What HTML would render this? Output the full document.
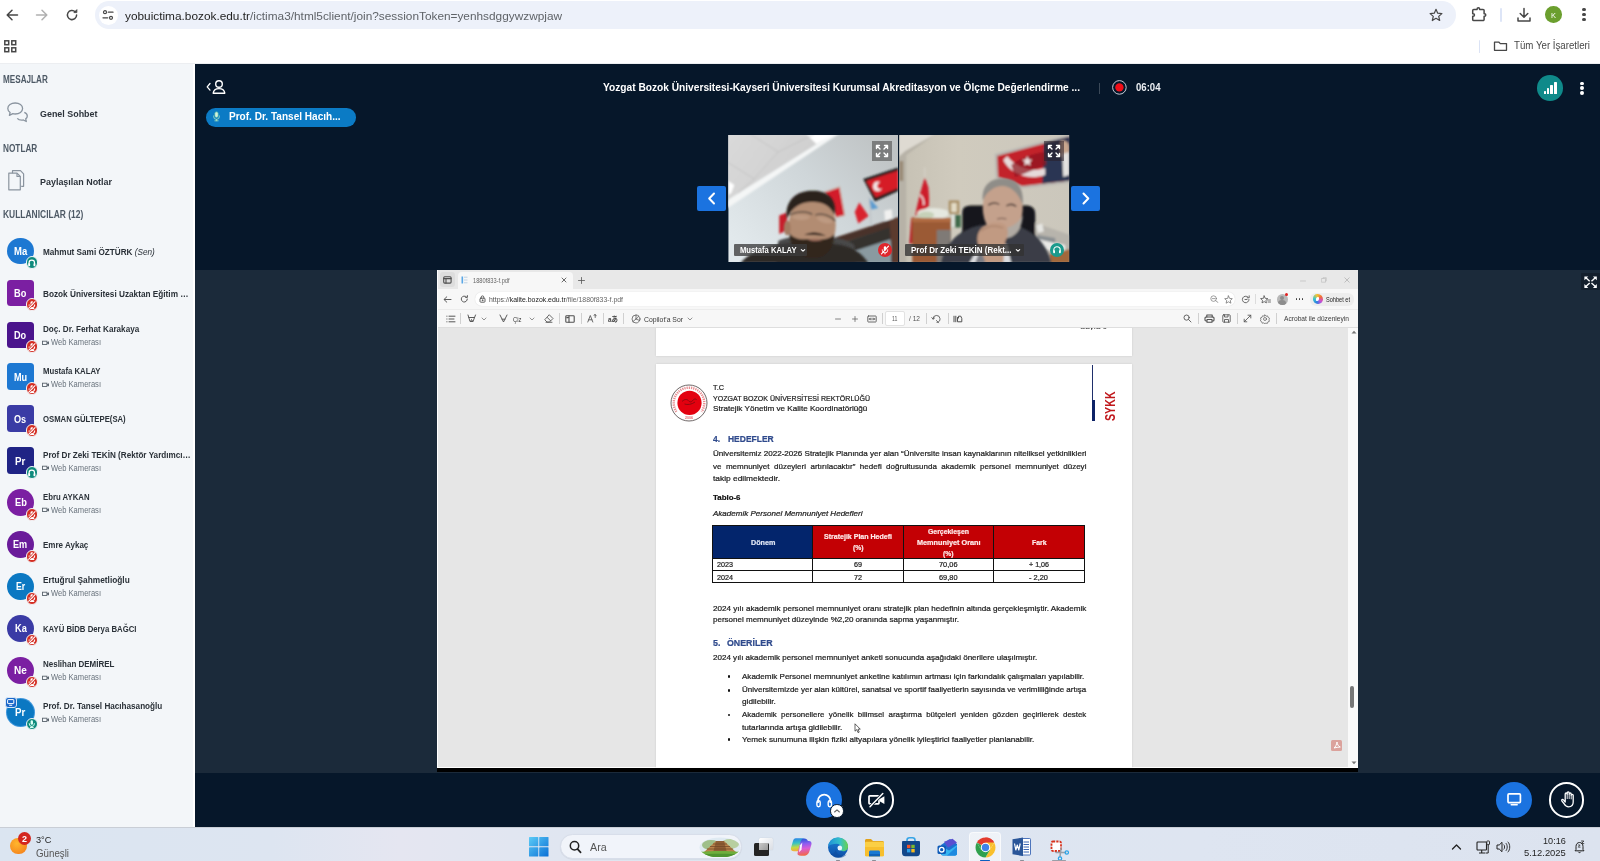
<!DOCTYPE html>
<html lang="tr"><head><meta charset="utf-8"><title>Yozgat Bozok Üniversitesi - Toplantı</title>
<style>
*{box-sizing:border-box;margin:0;padding:0}
html,body{width:1600px;height:861px;overflow:hidden;background:#fff}
body{position:relative;font-family:"Liberation Sans",sans-serif}
section,header,aside,main,footer,nav{position:absolute;left:0;top:0;width:1600px;height:861px}
.t{position:absolute;white-space:nowrap;transform-origin:0 0;line-height:normal;display:block}
footer,header,aside,main{will-change:transform}

</style></head>
<body>
<header><div style="position:absolute;left:0px;top:0px;width:1600px;height:63px;background:#fff;"></div><div style="position:absolute;left:95px;top:1px;width:1361px;height:28px;background:#edf1fa;border-radius:14px"></div><svg style="position:absolute;left:5px;top:8px;" width="14" height="14" viewBox="0 0 14 14"><path d="M12.5 7H2.5M7 2.2L2.2 7L7 11.8" fill="none" stroke="#474747" stroke-width="1.5" stroke-linecap="round" stroke-linejoin="round"/></svg><svg style="position:absolute;left:35px;top:8px;" width="14" height="14" viewBox="0 0 14 14"><path d="M1.5 7H11.5M7 2.2L11.8 7L7 11.8" fill="none" stroke="#b0b0b0" stroke-width="1.5" stroke-linecap="round" stroke-linejoin="round"/></svg><svg style="position:absolute;left:65px;top:8px;" width="14" height="14" viewBox="0 0 14 14"><path d="M11.6 7A4.6 4.6 0 1 1 10.2 3.7" fill="none" stroke="#474747" stroke-width="1.5" stroke-linecap="round"/><path d="M11.9 1.6V4.6H8.9Z" fill="#474747" stroke="#474747" stroke-width="0.8" stroke-linejoin="round"/></svg><div style="position:absolute;left:98.5px;top:5.5px;width:19px;height:19px;background:#fff;border-radius:50%"></div><svg style="position:absolute;left:102px;top:9px;" width="12" height="12" viewBox="0 0 12 12"><circle cx="3" cy="3.2" r="1.5" fill="none" stroke="#474747" stroke-width="1.2"/><path d="M6.3 3.2H11" stroke="#474747" stroke-width="1.3" stroke-linecap="round"/><circle cx="9" cy="8.8" r="1.5" fill="none" stroke="#474747" stroke-width="1.2"/><path d="M1 8.8H5.7" stroke="#474747" stroke-width="1.3" stroke-linecap="round"/></svg><span class="t" style="left:125px;top:8.5px;transform:scaleX(1.0205);font:400 11.6px 'Liberation Sans',sans-serif;color:#5f6368;"><span style="color:#1f1f1f">yobuictima.bozok.edu.tr</span>/ictima3/html5client/join?sessionToken=yenhsdggywzwpjaw</span><svg style="position:absolute;left:1429px;top:8px;" width="14" height="14" viewBox="0 0 14 14"><path d="M7 1.3L8.7 5.2L12.9 5.6L9.7 8.4L10.7 12.5L7 10.3L3.3 12.5L4.3 8.4L1.1 5.6L5.3 5.2Z" fill="none" stroke="#474747" stroke-width="1.2" stroke-linejoin="round"/></svg><svg style="position:absolute;left:1470px;top:6px;" width="18" height="16" viewBox="0 0 18 16"><path d="M2.700 4.600a1.100 1.100 0 0 1 1.100-1.100H7.100V3.100a1.250 1.250 0 0 1 2.500 0v.4h3.400a1.100 1.100 0 0 1 1.100 1.100v3.100h.4a1.250 1.250 0 0 1 0 2.500h-.4v3.300a1.100 1.100 0 0 1-1.100 1.100H3.800a1.100 1.100 0 0 1-1.100-1.100v-3.300h.5a1.250 1.250 0 0 0 0-2.500h-.5z" fill="none" stroke="#474747" stroke-width="1.500" stroke-linejoin="round"/></svg><div style="position:absolute;left:1500px;top:8px;width:2px;height:14px;background:#dde5f7;border-radius:1px"></div><svg style="position:absolute;left:1516px;top:7px;" width="16" height="16" viewBox="0 0 16 16"><path d="M8 1.5V10M4.2 6.5L8 10.2L11.8 6.5" fill="none" stroke="#474747" stroke-width="1.5" stroke-linecap="round" stroke-linejoin="round"/><path d="M2 11V14H14V11" fill="none" stroke="#474747" stroke-width="1.5" stroke-linecap="round" stroke-linejoin="round"/></svg><div style="position:absolute;left:1545.3px;top:6.4px;width:16.6px;height:16.6px;background:#6b9f2e;border-radius:50%"></div><span class="t" style="left:1551.1px;top:10.6px;transform:scaleX(0.9357);font:400 8px 'Liberation Sans',sans-serif;color:#fff;">K</span><div style="position:absolute;left:1582.4px;top:8.0px;width:3.2px;height:3.2px;background:#474747;border-radius:50%"></div><div style="position:absolute;left:1582.4px;top:13.1px;width:3.2px;height:3.2px;background:#474747;border-radius:50%"></div><div style="position:absolute;left:1582.4px;top:18.2px;width:3.2px;height:3.2px;background:#474747;border-radius:50%"></div><svg style="position:absolute;left:4px;top:40px;" width="13" height="13" viewBox="0 0 13 13"><rect x="0.8" y="0.8" width="3.9" height="3.9" fill="none" stroke="#474747" stroke-width="1.5"/><rect x="7.8" y="0.8" width="3.9" height="3.9" fill="none" stroke="#474747" stroke-width="1.5"/><rect x="0.8" y="7.8" width="3.9" height="3.9" fill="none" stroke="#474747" stroke-width="1.5"/><rect x="7.8" y="7.8" width="3.9" height="3.9" fill="none" stroke="#474747" stroke-width="1.5"/></svg><div style="position:absolute;left:1478.7px;top:39.5px;width:1.6px;height:13px;background:#dbe3f5;border-radius:1px"></div><svg style="position:absolute;left:1492.9px;top:40.4px;" width="16" height="12" viewBox="0 0 16 12"><path d="M1.5 2.2H6L7.3 3.6H13.5V10.3H1.5Z" fill="none" stroke="#474747" stroke-width="1.3" stroke-linejoin="round"/></svg><span class="t" style="left:1514px;top:39.4px;transform:scaleX(0.9153);font:400 10.6px 'Liberation Sans',sans-serif;color:#474747;">Tüm Yer İşaretleri</span><div style="position:absolute;left:0px;top:62.8px;width:1600px;height:0.8px;background:#eceef1;"></div></header><aside><div style="position:absolute;left:0px;top:63.5px;width:195px;height:763.5px;background:#fff;"></div><div style="position:absolute;left:0px;top:63.5px;width:192.8px;height:763.5px;background:#f3f6f9;"></div><span class="t" style="left:2.8px;top:72.7px;transform:scaleX(0.7687);font:700 10.6px 'Liberation Sans',sans-serif;color:#4e5a66;">MESAJLAR</span><svg style="position:absolute;left:6.3px;top:101px;" width="24" height="24" viewBox="0 0 24 24"><path d="M9.200 2C5 2 1.800 4.400 1.800 7.500c0 1.600.9 3 2.300 4L3.400 14.400l3.400-1.700c.8.2 1.600.3 2.400.3 4.200 0 7.400-2.400 7.400-5.500S13.400 2 9.200 2z" fill="none" stroke="#8a949f" stroke-width="1.300" stroke-linejoin="round"/><path d="M18.300 11.300c1.800.8 3 2.100 3 3.700 0 1.200-.6 2.200-1.600 2.900l.6 2.600-2.900-1.500c-.5.1-1.100.2-1.700.2-1.900 0-3.500-.7-4.400-1.900" fill="none" stroke="#8a949f" stroke-width="1.300" stroke-linejoin="round"/></svg><span class="t" style="left:40.3px;top:107.5px;transform:scaleX(0.9104);font:700 9.8px 'Liberation Sans',sans-serif;color:#2c333b;">Genel Sohbet</span><span class="t" style="left:2.8px;top:141.8px;transform:scaleX(0.7771);font:700 10.6px 'Liberation Sans',sans-serif;color:#4e5a66;">NOTLAR</span><svg style="position:absolute;left:6px;top:168px;" width="22" height="24" viewBox="0 0 22 24"><path d="M6.500 5.200V2.700h8l3.100 3.100v12.500h-2.400" fill="none" stroke="#8a949f" stroke-width="1.200" stroke-linejoin="round"/><path d="M2.800 5.200h8.200l3.300 3.300v13.300H2.800z" fill="none" stroke="#8a949f" stroke-width="1.200" stroke-linejoin="round"/><path d="M11 5.200v3.300h3.300" fill="none" stroke="#8a949f" stroke-width="1.200" stroke-linejoin="round"/></svg><span class="t" style="left:40.3px;top:176px;transform:scaleX(0.9118);font:700 9.8px 'Liberation Sans',sans-serif;color:#2c333b;">Paylaşılan Notlar</span><span class="t" style="left:2.8px;top:208px;transform:scaleX(0.7969);font:700 10.6px 'Liberation Sans',sans-serif;color:#4e5a66;">KULLANICILAR (12)</span><div style="position:absolute;left:6.9px;top:237.7px;width:26.8px;height:26.8px;background:#1d78d2;border-radius:50%"></div><span class="t" style="left:13.799999999999999px;top:245.9px;transform:scaleX(0.9143);font:700 10.4px 'Liberation Sans',sans-serif;color:#fff;">Ma</span><div style="position:absolute;left:25.500px;top:256.400px;width:12.800px;height:12.800px;border-radius:50%;background:#0e8a7c;border:1px solid #f3f6f9"></div><svg style="position:absolute;left:27.099999999999998px;top:258.0px;" width="9.6" height="9.6" viewBox="0 0 8 8"><path d="M1.700 5.300V4.100a2.300 2.300 0 0 1 4.600 0v1.200" fill="none" stroke="#fff" stroke-width="1"/><rect x="1" y="4.300" width="1.600" height="2.500" rx=".6" fill="#fff"/><rect x="5.400" y="4.300" width="1.600" height="2.500" rx=".6" fill="#fff"/></svg><span class="t" style="left:42.6px;top:245.7px;transform:scaleX(0.8348);font:700 9.8px 'Liberation Sans',sans-serif;color:#2a3138;">Mahmut Sami ÖZTÜRK <i style="font-weight:400">(Sen)</i></span><div style="position:absolute;left:6.9px;top:279.62px;width:26.8px;height:26.8px;background:#7b1fa2;border-radius:3.500px"></div><span class="t" style="left:14.249999999999998px;top:287.82px;transform:scaleX(0.8875);font:700 10.4px 'Liberation Sans',sans-serif;color:#fff;">Bo</span><div style="position:absolute;left:25.500px;top:298.320px;width:12.800px;height:12.800px;border-radius:50%;background:#d42d22;border:1px solid #f3f6f9"></div><svg style="position:absolute;left:27.099999999999998px;top:299.91999999999996px;" width="9.6" height="9.6" viewBox="0 0 8 8"><rect x="2.900" y="1" width="2.400" height="3.900" rx="1.200" fill="#fff"/><path d="M1.800 3.900v.2a2.300 2.300 0 0 0 4.600 0v-.2" fill="none" stroke="#fff" stroke-width=".9" stroke-linecap="round"/><path d="M2.600 7h3" stroke="#fff" stroke-width="1" stroke-linecap="round"/><path d="M1.300 6.900L6.700 1.300" stroke="#d42d22" stroke-width="2"/><path d="M1.300 6.900L6.700 1.300" stroke="#fff" stroke-width=".9" stroke-linecap="round"/></svg><span class="t" style="left:42.6px;top:287.62px;transform:scaleX(0.8404);font:700 9.8px 'Liberation Sans',sans-serif;color:#2a3138;">Bozok Üniversitesi Uzaktan Eğitim …</span><div style="position:absolute;left:6.9px;top:321.54px;width:26.8px;height:26.8px;background:#4a148c;border-radius:3.500px"></div><span class="t" style="left:14.299999999999999px;top:329.74px;transform:scaleX(0.8803);font:700 10.4px 'Liberation Sans',sans-serif;color:#fff;">Do</span><div style="position:absolute;left:25.500px;top:340.240px;width:12.800px;height:12.800px;border-radius:50%;background:#d42d22;border:1px solid #f3f6f9"></div><svg style="position:absolute;left:27.099999999999998px;top:341.84px;" width="9.6" height="9.6" viewBox="0 0 8 8"><rect x="2.900" y="1" width="2.400" height="3.900" rx="1.200" fill="#fff"/><path d="M1.800 3.900v.2a2.300 2.300 0 0 0 4.600 0v-.2" fill="none" stroke="#fff" stroke-width=".9" stroke-linecap="round"/><path d="M2.600 7h3" stroke="#fff" stroke-width="1" stroke-linecap="round"/><path d="M1.300 6.900L6.700 1.300" stroke="#d42d22" stroke-width="2"/><path d="M1.300 6.900L6.700 1.300" stroke="#fff" stroke-width=".9" stroke-linecap="round"/></svg><span class="t" style="left:42.6px;top:322.94px;transform:scaleX(0.8294);font:700 9.8px 'Liberation Sans',sans-serif;color:#2a3138;">Doç. Dr. Ferhat Karakaya</span><svg style="position:absolute;left:42.2px;top:339.64px;" width="8" height="6" viewBox="0 0 8 6"><rect x=".5" y="1.200" width="4.400" height="3.300" fill="none" stroke="#59636d" stroke-width=".9"/><path d="M5 2.300L7 1.300v3.100L5 3.400z" fill="#59636d"/></svg><span class="t" style="left:51px;top:337.94px;transform:scaleX(0.9259);font:400 8.2px 'Liberation Sans',sans-serif;color:#68727c;">Web Kamerası</span><div style="position:absolute;left:6.9px;top:363.46000000000004px;width:26.8px;height:26.8px;background:#1d78d2;border-radius:3.500px"></div><span class="t" style="left:13.799999999999999px;top:371.66px;transform:scaleX(0.8791);font:700 10.4px 'Liberation Sans',sans-serif;color:#fff;">Mu</span><div style="position:absolute;left:25.500px;top:382.160px;width:12.800px;height:12.800px;border-radius:50%;background:#d42d22;border:1px solid #f3f6f9"></div><svg style="position:absolute;left:27.099999999999998px;top:383.76px;" width="9.6" height="9.6" viewBox="0 0 8 8"><rect x="2.900" y="1" width="2.400" height="3.900" rx="1.200" fill="#fff"/><path d="M1.800 3.900v.2a2.300 2.300 0 0 0 4.600 0v-.2" fill="none" stroke="#fff" stroke-width=".9" stroke-linecap="round"/><path d="M2.600 7h3" stroke="#fff" stroke-width="1" stroke-linecap="round"/><path d="M1.300 6.900L6.700 1.300" stroke="#d42d22" stroke-width="2"/><path d="M1.300 6.900L6.700 1.300" stroke="#fff" stroke-width=".9" stroke-linecap="round"/></svg><span class="t" style="left:42.6px;top:364.86px;transform:scaleX(0.7921);font:700 9.8px 'Liberation Sans',sans-serif;color:#2a3138;">Mustafa KALAY</span><svg style="position:absolute;left:42.2px;top:381.56px;" width="8" height="6" viewBox="0 0 8 6"><rect x=".5" y="1.200" width="4.400" height="3.300" fill="none" stroke="#59636d" stroke-width=".9"/><path d="M5 2.300L7 1.300v3.100L5 3.400z" fill="#59636d"/></svg><span class="t" style="left:51px;top:379.86px;transform:scaleX(0.9259);font:400 8.2px 'Liberation Sans',sans-serif;color:#68727c;">Web Kamerası</span><div style="position:absolute;left:6.9px;top:405.38px;width:26.8px;height:26.8px;background:#3a3ba5;border-radius:3.500px"></div><span class="t" style="left:14.299999999999999px;top:413.58px;transform:scaleX(0.8793);font:700 10.4px 'Liberation Sans',sans-serif;color:#fff;">Os</span><div style="position:absolute;left:25.500px;top:424.080px;width:12.800px;height:12.800px;border-radius:50%;background:#d42d22;border:1px solid #f3f6f9"></div><svg style="position:absolute;left:27.099999999999998px;top:425.67999999999995px;" width="9.6" height="9.6" viewBox="0 0 8 8"><rect x="2.900" y="1" width="2.400" height="3.900" rx="1.200" fill="#fff"/><path d="M1.800 3.900v.2a2.300 2.300 0 0 0 4.600 0v-.2" fill="none" stroke="#fff" stroke-width=".9" stroke-linecap="round"/><path d="M2.600 7h3" stroke="#fff" stroke-width="1" stroke-linecap="round"/><path d="M1.300 6.900L6.700 1.300" stroke="#d42d22" stroke-width="2"/><path d="M1.300 6.900L6.700 1.300" stroke="#fff" stroke-width=".9" stroke-linecap="round"/></svg><span class="t" style="left:42.6px;top:413.38px;transform:scaleX(0.7886);font:700 9.8px 'Liberation Sans',sans-serif;color:#2a3138;">OSMAN GÜLTEPE(SA)</span><div style="position:absolute;left:6.9px;top:447.30000000000007px;width:26.8px;height:26.8px;background:#1f2385;border-radius:3.500px"></div><span class="t" style="left:15.249999999999998px;top:455.5px;transform:scaleX(0.9377);font:700 10.4px 'Liberation Sans',sans-serif;color:#fff;">Pr</span><div style="position:absolute;left:25.500px;top:466.000px;width:12.800px;height:12.800px;border-radius:50%;background:#0e8a7c;border:1px solid #f3f6f9"></div><svg style="position:absolute;left:27.099999999999998px;top:467.6px;" width="9.6" height="9.6" viewBox="0 0 8 8"><path d="M1.700 5.300V4.100a2.300 2.300 0 0 1 4.600 0v1.200" fill="none" stroke="#fff" stroke-width="1"/><rect x="1" y="4.300" width="1.600" height="2.500" rx=".6" fill="#fff"/><rect x="5.400" y="4.300" width="1.600" height="2.500" rx=".6" fill="#fff"/></svg><span class="t" style="left:42.6px;top:448.7px;transform:scaleX(0.8305);font:700 9.8px 'Liberation Sans',sans-serif;color:#2a3138;">Prof Dr Zeki TEKİN (Rektör Yardımcı…</span><svg style="position:absolute;left:42.2px;top:465.40000000000003px;" width="8" height="6" viewBox="0 0 8 6"><rect x=".5" y="1.200" width="4.400" height="3.300" fill="none" stroke="#59636d" stroke-width=".9"/><path d="M5 2.300L7 1.300v3.100L5 3.400z" fill="#59636d"/></svg><span class="t" style="left:51px;top:463.7px;transform:scaleX(0.9259);font:400 8.2px 'Liberation Sans',sans-serif;color:#68727c;">Web Kamerası</span><div style="position:absolute;left:6.9px;top:489.22px;width:26.8px;height:26.8px;background:#7b1fa2;border-radius:50%"></div><span class="t" style="left:14.499999999999998px;top:497.42px;transform:scaleX(0.8885);font:700 10.4px 'Liberation Sans',sans-serif;color:#fff;">Eb</span><div style="position:absolute;left:25.500px;top:507.920px;width:12.800px;height:12.800px;border-radius:50%;background:#d42d22;border:1px solid #f3f6f9"></div><svg style="position:absolute;left:27.099999999999998px;top:509.52000000000004px;" width="9.6" height="9.6" viewBox="0 0 8 8"><rect x="2.900" y="1" width="2.400" height="3.900" rx="1.200" fill="#fff"/><path d="M1.800 3.900v.2a2.300 2.300 0 0 0 4.600 0v-.2" fill="none" stroke="#fff" stroke-width=".9" stroke-linecap="round"/><path d="M2.600 7h3" stroke="#fff" stroke-width="1" stroke-linecap="round"/><path d="M1.300 6.900L6.700 1.300" stroke="#d42d22" stroke-width="2"/><path d="M1.300 6.900L6.700 1.300" stroke="#fff" stroke-width=".9" stroke-linecap="round"/></svg><span class="t" style="left:42.6px;top:490.62px;transform:scaleX(0.7934);font:700 9.8px 'Liberation Sans',sans-serif;color:#2a3138;">Ebru AYKAN</span><svg style="position:absolute;left:42.2px;top:507.32px;" width="8" height="6" viewBox="0 0 8 6"><rect x=".5" y="1.200" width="4.400" height="3.300" fill="none" stroke="#59636d" stroke-width=".9"/><path d="M5 2.300L7 1.300v3.100L5 3.400z" fill="#59636d"/></svg><span class="t" style="left:51px;top:505.62px;transform:scaleX(0.9259);font:400 8.2px 'Liberation Sans',sans-serif;color:#68727c;">Web Kamerası</span><div style="position:absolute;left:6.9px;top:531.14px;width:26.8px;height:26.8px;background:#6a1b9a;border-radius:50%"></div><span class="t" style="left:13.299999999999999px;top:539.34px;transform:scaleX(0.8781);font:700 10.4px 'Liberation Sans',sans-serif;color:#fff;">Em</span><div style="position:absolute;left:25.500px;top:549.840px;width:12.800px;height:12.800px;border-radius:50%;background:#d42d22;border:1px solid #f3f6f9"></div><svg style="position:absolute;left:27.099999999999998px;top:551.44px;" width="9.6" height="9.6" viewBox="0 0 8 8"><rect x="2.900" y="1" width="2.400" height="3.900" rx="1.200" fill="#fff"/><path d="M1.800 3.900v.2a2.300 2.300 0 0 0 4.600 0v-.2" fill="none" stroke="#fff" stroke-width=".9" stroke-linecap="round"/><path d="M2.600 7h3" stroke="#fff" stroke-width="1" stroke-linecap="round"/><path d="M1.300 6.900L6.700 1.300" stroke="#d42d22" stroke-width="2"/><path d="M1.300 6.900L6.700 1.300" stroke="#fff" stroke-width=".9" stroke-linecap="round"/></svg><span class="t" style="left:42.6px;top:539.14px;transform:scaleX(0.8181);font:700 9.8px 'Liberation Sans',sans-serif;color:#2a3138;">Emre Aykaç</span><div style="position:absolute;left:6.9px;top:573.0600000000001px;width:26.8px;height:26.8px;background:#0b78c2;border-radius:50%"></div><span class="t" style="left:15.749999999999998px;top:581.26px;transform:scaleX(0.8467);font:700 10.4px 'Liberation Sans',sans-serif;color:#fff;">Er</span><div style="position:absolute;left:25.500px;top:591.760px;width:12.800px;height:12.800px;border-radius:50%;background:#d42d22;border:1px solid #f3f6f9"></div><svg style="position:absolute;left:27.099999999999998px;top:593.3600000000001px;" width="9.6" height="9.6" viewBox="0 0 8 8"><rect x="2.900" y="1" width="2.400" height="3.900" rx="1.200" fill="#fff"/><path d="M1.800 3.900v.2a2.300 2.300 0 0 0 4.600 0v-.2" fill="none" stroke="#fff" stroke-width=".9" stroke-linecap="round"/><path d="M2.600 7h3" stroke="#fff" stroke-width="1" stroke-linecap="round"/><path d="M1.300 6.900L6.700 1.300" stroke="#d42d22" stroke-width="2"/><path d="M1.300 6.900L6.700 1.300" stroke="#fff" stroke-width=".9" stroke-linecap="round"/></svg><span class="t" style="left:42.6px;top:574.46px;transform:scaleX(0.8473);font:700 9.8px 'Liberation Sans',sans-serif;color:#2a3138;">Ertuğrul Şahmetlioğlu</span><svg style="position:absolute;left:42.2px;top:591.1600000000001px;" width="8" height="6" viewBox="0 0 8 6"><rect x=".5" y="1.200" width="4.400" height="3.300" fill="none" stroke="#59636d" stroke-width=".9"/><path d="M5 2.300L7 1.300v3.100L5 3.400z" fill="#59636d"/></svg><span class="t" style="left:51px;top:589.46px;transform:scaleX(0.9259);font:400 8.2px 'Liberation Sans',sans-serif;color:#68727c;">Web Kamerası</span><div style="position:absolute;left:6.9px;top:614.98px;width:26.8px;height:26.8px;background:#3a3ba5;border-radius:50%"></div><span class="t" style="left:14.499999999999998px;top:623.18px;transform:scaleX(0.8874);font:700 10.4px 'Liberation Sans',sans-serif;color:#fff;">Ka</span><div style="position:absolute;left:25.500px;top:633.680px;width:12.800px;height:12.800px;border-radius:50%;background:#d42d22;border:1px solid #f3f6f9"></div><svg style="position:absolute;left:27.099999999999998px;top:635.2800000000001px;" width="9.6" height="9.6" viewBox="0 0 8 8"><rect x="2.900" y="1" width="2.400" height="3.900" rx="1.200" fill="#fff"/><path d="M1.800 3.900v.2a2.300 2.300 0 0 0 4.600 0v-.2" fill="none" stroke="#fff" stroke-width=".9" stroke-linecap="round"/><path d="M2.600 7h3" stroke="#fff" stroke-width="1" stroke-linecap="round"/><path d="M1.300 6.900L6.700 1.300" stroke="#d42d22" stroke-width="2"/><path d="M1.300 6.900L6.700 1.300" stroke="#fff" stroke-width=".9" stroke-linecap="round"/></svg><span class="t" style="left:42.6px;top:622.98px;transform:scaleX(0.7938);font:700 9.8px 'Liberation Sans',sans-serif;color:#2a3138;">KAYÜ BİDB Derya BAĞCI</span><div style="position:absolute;left:6.9px;top:656.9000000000001px;width:26.8px;height:26.8px;background:#7b1fa2;border-radius:50%"></div><span class="t" style="left:13.999999999999998px;top:665.1px;transform:scaleX(0.9626);font:700 10.4px 'Liberation Sans',sans-serif;color:#fff;">Ne</span><div style="position:absolute;left:25.500px;top:675.600px;width:12.800px;height:12.800px;border-radius:50%;background:#d42d22;border:1px solid #f3f6f9"></div><svg style="position:absolute;left:27.099999999999998px;top:677.2000000000002px;" width="9.6" height="9.6" viewBox="0 0 8 8"><rect x="2.900" y="1" width="2.400" height="3.900" rx="1.200" fill="#fff"/><path d="M1.800 3.900v.2a2.300 2.300 0 0 0 4.600 0v-.2" fill="none" stroke="#fff" stroke-width=".9" stroke-linecap="round"/><path d="M2.600 7h3" stroke="#fff" stroke-width="1" stroke-linecap="round"/><path d="M1.300 6.900L6.700 1.300" stroke="#d42d22" stroke-width="2"/><path d="M1.300 6.900L6.700 1.300" stroke="#fff" stroke-width=".9" stroke-linecap="round"/></svg><span class="t" style="left:42.6px;top:658.3px;transform:scaleX(0.8145);font:700 9.8px 'Liberation Sans',sans-serif;color:#2a3138;">Neslihan DEMİREL</span><svg style="position:absolute;left:42.2px;top:675.0000000000001px;" width="8" height="6" viewBox="0 0 8 6"><rect x=".5" y="1.200" width="4.400" height="3.300" fill="none" stroke="#59636d" stroke-width=".9"/><path d="M5 2.300L7 1.300v3.100L5 3.400z" fill="#59636d"/></svg><span class="t" style="left:51px;top:673.3px;transform:scaleX(0.9259);font:400 8.2px 'Liberation Sans',sans-serif;color:#68727c;">Web Kamerası</span><div style="position:absolute;left:6.9px;top:698.82px;width:26.8px;height:26.8px;background:#0b78c2;border-radius:50%;box-shadow:0 0 0 1px #3f96dc"></div><span class="t" style="left:15.249999999999998px;top:707.02px;transform:scaleX(0.9377);font:700 10.4px 'Liberation Sans',sans-serif;color:#fff;">Pr</span><div style="position:absolute;left:25.500px;top:717.520px;width:12.800px;height:12.800px;border-radius:50%;background:#0e8a7c;border:1px solid #f3f6f9"></div><svg style="position:absolute;left:27.099999999999998px;top:719.1200000000001px;" width="9.6" height="9.6" viewBox="0 0 8 8"><rect x="3" y="1.100" width="2" height="3.700" rx="1" fill="#d9fff5"/><path d="M1.900 3.800v.3a2.100 2.100 0 0 0 4.200 0v-.3M4 6.200v.9M2.800 7.100h2.400" fill="none" stroke="#d9fff5" stroke-width=".8" stroke-linecap="round"/></svg><span class="t" style="left:42.6px;top:700.22px;transform:scaleX(0.8311);font:700 9.8px 'Liberation Sans',sans-serif;color:#2a3138;">Prof. Dr. Tansel Hacıhasanoğlu</span><svg style="position:absolute;left:42.2px;top:716.9200000000001px;" width="8" height="6" viewBox="0 0 8 6"><rect x=".5" y="1.200" width="4.400" height="3.300" fill="none" stroke="#59636d" stroke-width=".9"/><path d="M5 2.300L7 1.300v3.100L5 3.400z" fill="#59636d"/></svg><span class="t" style="left:51px;top:715.22px;transform:scaleX(0.9259);font:400 8.2px 'Liberation Sans',sans-serif;color:#68727c;">Web Kamerası</span><div style="position:absolute;left:5.3px;top:696.9200000000001px;width:11.4px;height:10.8px;background:#1a67c9;border-radius:3px;border:1px solid #d6e6f7"></div><svg style="position:absolute;left:7.3px;top:698.9200000000001px;" width="7.4" height="7" viewBox="0 0 7.4 7"><rect x=".6" y=".6" width="6.200" height="4" rx=".5" fill="none" stroke="#fff" stroke-width="1"/><path d="M2.200 6.300h3" stroke="#fff" stroke-width="1"/></svg></aside><main><div style="position:absolute;left:195px;top:63.6px;width:1405px;height:763.4px;background:#06172a;"></div><div style="position:absolute;left:195px;top:270.3px;width:1405px;height:502.5px;background:#1b2a3a;"></div><svg style="position:absolute;left:205px;top:78px;" width="22" height="17" viewBox="0 0 22 17"><path d="M5 5.500L2.200 8.800L5 12.100" fill="none" stroke="#fff" stroke-width="1.300" stroke-linecap="round" stroke-linejoin="round"/><circle cx="14" cy="6" r="3.300" fill="none" stroke="#fff" stroke-width="1.400"/><path d="M8.200 15.200c.4-3.200 2.800-4.600 5.800-4.600s5.400 1.400 5.800 4.600z" fill="none" stroke="#fff" stroke-width="1.400" stroke-linejoin="round"/></svg><div style="position:absolute;left:206px;top:108px;width:150px;height:18.5px;background:#0b7bc5;border-radius:9.300px"></div><svg style="position:absolute;left:212px;top:111.3px;" width="9" height="10.8" viewBox="0 0 10 12"><rect x="3.300" y="1" width="3.400" height="6" rx="1.700" fill="#d5f0e0" stroke="#7fd6a8" stroke-width=".8"/><path d="M1.800 5.500v.6a3.200 3.200 0 0 0 6.400 0v-.6M5 9.300v1.500M3.200 10.900h3.600" fill="none" stroke="#9fe0bf" stroke-width="1" stroke-linecap="round"/></svg><span class="t" style="left:228.7px;top:110.3px;transform:scaleX(0.9143);font:700 11px 'Liberation Sans',sans-serif;color:#fff;">Prof. Dr. Tansel Hacıh...</span><span class="t" style="left:603px;top:81px;transform:scaleX(0.8843);font:700 11.5px 'Liberation Sans',sans-serif;color:#fff;">Yozgat Bozok Üniversitesi-Kayseri Üniversitesi Kurumsal Akreditasyon ve Ölçme Değerlendirme ...</span><div style="position:absolute;left:1099px;top:82.5px;width:1px;height:11px;background:#3b4958;"></div><svg style="position:absolute;left:1111px;top:78.5px;" width="17" height="17" viewBox="0 0 17 17"><circle cx="8.400" cy="8.400" r="6.800" fill="none" stroke="#c5cad6" stroke-width="1"/><circle cx="8.400" cy="8.400" r="4.200" fill="#f20d17"/></svg><span class="t" style="left:1136.3px;top:81.2px;transform:scaleX(0.8706);font:700 11px 'Liberation Sans',sans-serif;color:#eef1f5;">06:04</span><div style="position:absolute;left:1537.2px;top:75.3px;width:25.6px;height:25.6px;background:#0f8a8a;border-radius:50%"></div><div style="position:absolute;left:1544.1px;top:91.3px;width:2.2px;height:3.2px;background:#fff;border-radius:.6px"></div><div style="position:absolute;left:1547px;top:88.1px;width:2.4px;height:6.4px;background:#fff;border-radius:.6px"></div><div style="position:absolute;left:1550.2px;top:84.9px;width:2.6px;height:9.6px;background:#fff;border-radius:.6px"></div><div style="position:absolute;left:1553.7px;top:81.7px;width:3px;height:12.8px;background:#fff;border-radius:.6px"></div><div style="position:absolute;left:1579.8px;top:81.69999999999999px;width:3.8px;height:3.8px;background:#fff;border-radius:50%"></div><div style="position:absolute;left:1579.8px;top:86.39999999999999px;width:3.8px;height:3.8px;background:#fff;border-radius:50%"></div><div style="position:absolute;left:1579.8px;top:91.19999999999999px;width:3.8px;height:3.8px;background:#fff;border-radius:50%"></div><div style="position:absolute;left:697px;top:186px;width:29px;height:25px;background:#1b73e0;border-radius:2px"><svg style="position:absolute;left:0px;top:0px;" width="29" height="25" viewBox="0 0 29 25"><path d="M17 7.500L12.200 12.500L17 17.500" fill="none" stroke="#fff" stroke-width="2" stroke-linecap="round" stroke-linejoin="round"/></svg></div><div style="position:absolute;left:1071px;top:186px;width:29px;height:25px;background:#1b73e0;border-radius:2px"><svg style="position:absolute;left:0px;top:0px;" width="29" height="25" viewBox="0 0 29 25"><path d="M12.500 7.500L17.300 12.500L12.500 17.500" fill="none" stroke="#fff" stroke-width="2" stroke-linecap="round" stroke-linejoin="round"/></svg></div><svg style="position:absolute;left:727.5px;top:135px;" width="170.5" height="127" viewBox="0 0 170 127"><defs>
<filter id="b1" x="-10%" y="-10%" width="120%" height="120%"><feGaussianBlur stdDeviation="1"/></filter>
<filter id="b2" x="-10%" y="-10%" width="120%" height="120%"><feGaussianBlur stdDeviation="2.200"/></filter>
<linearGradient id="v1w" gradientUnits="userSpaceOnUse" x1="150" y1="0" x2="20" y2="120"><stop offset="0" stop-color="#bfc3c4"/><stop offset=".45" stop-color="#cfd6d9"/><stop offset="1" stop-color="#e2e9ec"/></linearGradient>
<linearGradient id="v1c" gradientUnits="userSpaceOnUse" x1="0" y1="0" x2="70" y2="50"><stop offset="0" stop-color="#dadada"/><stop offset="1" stop-color="#cecece"/></linearGradient>
<clipPath id="c1"><rect width="170" height="127"/></clipPath></defs>
<g clip-path="url(#c1)">
<rect width="170" height="127" fill="url(#v1w)"/>
<g filter="url(#b1)">
<path d="M-2 -2H106L-2 66Z" fill="url(#v1c)"/>
<path d="M-2 66L106 -2L112 -2L-2 74Z" fill="#f4f6f6"/>
<path d="M78 -1H106L88 9Z" fill="#ffffff"/>
<path d="M0 46L6 50L3 58L0 60Z" fill="#fff"/>
<path d="M22 -1L50 17L86 -1M-1 27L26 44L50 17M26 44L10 58" stroke="#bdbdbd" stroke-width=".7" fill="none"/>
<path d="M135 44L170 32.500V56L146.500 66.500Z" fill="#1d1a1a"/>
<path d="M138 46L170 35.500V53L147.500 62.500Z" fill="#d61f28"/>
<path d="M147 47c-3 2-3 8 1 9 3 .8 5-1 6-3-2 2-5 1-5-2 0-2 1-3 3-4-2-.8-4-.5-5 0z" fill="#f3e6e6"/>
<path d="M95 56.500L112 50.500L117.500 81L107 83.500Z" fill="#c9c3bd"/>
<path d="M96.500 57.500L111 52.500L116 80L108 82Z" fill="#d21f2a"/>
<path d="M51 80.500L58.800 77.500V95L51 99Z" fill="#c71f2a"/>
<path d="M126.500 77L131 67.500L140.500 81L130 88.500Z" fill="#d9242e"/>
<path d="M140.500 62.500L150 73L143 74.500Z" fill="#5b9bd0"/>
<path d="M140.500 62L141.500 62L143.500 90L142.500 90Z" fill="#b9bec2"/>
<path d="M156 75.800l7.500-1.500.8 9.700-7.500 1.500z" fill="#f1f1f0"/>
<path d="M107 102.500L172 81.500V90L107 110Z" fill="#4a3229"/>
<path d="M110 109L172 89V128H104Z" fill="#34302e"/>
<path d="M126 116L163 104V128H124Z" fill="#8a9aa0"/>
<path d="M161 85L172 82V128H164Z" fill="#5c3a2e"/>
<path d="M50 106C56 102 70 101 84 102C100 101 118 103 126 110L128 128H48Z" fill="#4a4a4a"/>
</g>
<g filter="url(#b1)">
<path d="M12 128C24 114 48 108 70 109H104C122 110 134 118 140 128Z" fill="#2d2926"/>
<ellipse cx="84" cy="90" rx="23.500" ry="30" fill="#b28c72"/>
<ellipse cx="59" cy="93" rx="3.500" ry="7.500" fill="#a37c62"/>
<path d="M58.500 84C56 64 70 55.500 84 55.800C99 55 109 64 106.500 80C101 70 94 66.500 84 67C74 66.500 64 71 58.500 84Z" fill="#2b221c"/>
<path d="M61 98C62 116 74 124 86 123C98 123 106 113 106 99C100 106 92 104 84 104C76 104 67 106 61 98Z" fill="#33261e"/>
<path d="M76 100C82 96.500 90 96.500 98 101C92 99.800 82 99.800 76 100Z" fill="#231813"/>
<path d="M79 104.500C84 103.500 90 103.500 95 105C90 106.500 84 106.500 79 104.500Z" fill="#9a6a5a"/>
<path d="M61 80C70 75.500 80 76.500 84 79.500M87 80C94 77.500 103 81 107 86" stroke="#4d443d" stroke-width="1.300" fill="none"/>
<path d="M63 81.500C69 79 78 79.500 82 82C80 86 66 86 63 81.500ZM88 82.500C93 80.500 101 83 105 87C101 90 91 88 88 82.500Z" fill="#c2a088" opacity=".7"/>
</g>
</g></svg><svg style="position:absolute;left:899px;top:135px;" width="170.5" height="127" viewBox="0 0 170 127"><defs>
<linearGradient id="v2bg" x1="0" y1="0" x2="1" y2="0"><stop offset="0" stop-color="#c6c1b4"/><stop offset=".35" stop-color="#d0cbbe"/><stop offset="1" stop-color="#cbc7bc"/></linearGradient>
<clipPath id="c2"><rect width="170" height="127"/></clipPath></defs>
<g clip-path="url(#c2)">
<rect width="170" height="127" fill="url(#v2bg)"/>
<g filter="url(#b1)">
<path d="M-1 -1H36L7 20V128H-1Z" fill="#b7b2a7"/>
<path d="M-1 -1H36L6 16L-1 22Z" fill="#dedad2"/>
<path d="M0 26H4V46H0Z" fill="#9a8a76"/>
<path d="M95.500 19L171 -1V48L122.500 53.500L96.500 43.500Z" fill="#b9b7b2"/>
<path d="M98 21L171 1.500V45.500L123 51L98.800 42Z" fill="#c3212c"/>
<path d="M145 8L171 1.500V45.500L143 48.500Z" fill="#2c3552"/>
<path d="M104 25C110 38 128 46 146 40L146 33C132 38 116 32 108 21Z" fill="#e6dada"/>
<path d="M112 30C122 22 136 18 146 17L147 30C136 34 122 40 116 42Z" fill="#8f1720" opacity=".75"/>
<path d="M128 21l1.500 3.500 3.800.2-3 2.400 1 3.700-3.300-2.100-3.200 2.100 1-3.700-3-2.400 3.800-.2z" fill="#e9dfdf"/>
<path d="M161 6C167 4 171 8 170 16C169 23 163 25 161 20Z" fill="#c8a68e"/>
<path d="M163 19L170 17V40L164 42Z" fill="#e4e2e0"/>
<path d="M25 32.500L26 32.500L26 44L25 44Z" fill="#d9d5cc"/>
<path d="M25.500 42.500L29 52C30 60 30 66 29.500 71.500L16 81C18 68 22 54 25.500 42.500Z" fill="#cd1f2c"/>
<path d="M21 60c2 2 4 6 3.500 10" stroke="#f1e4e4" stroke-width="1.600" fill="none"/>
<path d="M12 83L15 82L14 108L10 109Z" fill="#b81c28"/>
<ellipse cx="34" cy="78.500" rx="16" ry="5.500" fill="#e5e8e0"/>
<ellipse cx="27" cy="80" rx="8" ry="3.500" fill="#b9c7a6" opacity=".7"/>
<rect x="49.500" y="65.500" width="10.500" height="13.500" fill="#a88e62"/>
<rect x="52" y="68" width="5.500" height="9" fill="#e3dcc6"/>
<path d="M13 83H51.500V128H13Z" fill="#9b5a35"/>
<path d="M13 83H51.500V87H13Z" fill="#b06c42"/>
<path d="M37.500 95H51.500V128H37.500Z" fill="#7f7a76"/>
<rect x="52.500" y="80" width="9" height="12.500" fill="#3f6a48"/>
<rect x="52.500" y="80" width="3" height="12.500" fill="#e8ece6"/>
<path d="M63 78C63 71.500 67 70.500 74 70.500H126C133 70.500 136 73 136 80V112H63Z" fill="#15171a"/>
<path d="M136 88L171 100V128H136Z" fill="#b7b4ac"/>
<path d="M137 90l6-1.500 1.500 8-6 1.500z" fill="#e6e6e2"/>
<path d="M140 104l26 6v9l-26-6z" fill="#e9e9e6"/>
<path d="M138 100l18 3v5l-18-4z" fill="#8a8f92"/>
<path d="M150 119L171 114V128H150Z" fill="#a1683a"/>
</g>
<g filter="url(#b1)">
<path d="M42 128C46 106 62 94 82 90H116C136 96 148 110 152 128Z" fill="#3a3e46"/>
<path d="M70 128L84 104L108 110L112 128Z" fill="#dcdde0"/>
<path d="M84 106L96 128H76Z" fill="#3a3e46" opacity=".6"/>
<ellipse cx="103.500" cy="73" rx="20" ry="28" fill="#c4a18c"/>
<path d="M83.500 66C82 49 93 43 104 43.500C117 43 125 52 123.500 70C119 57 111 51 103 51C95 51 87 57 83.500 66Z" fill="#8f8d88"/>
<path d="M88 88C92 102 102 106 112 102C120 98 123 90 123.500 80C117 94 98 98 88 88Z" fill="#b0aaa3"/>
<path d="M78 104C78 92 90 86 102 88C110 90 110 100 106 106L104 128H86C84 118 78 112 78 104Z" fill="#c19a82"/>
<path d="M82 96c6-5 14-6 22-3" stroke="#a9826c" stroke-width="1.200" fill="none"/>
<path d="M89 70c4-2.500 8-2.500 11-.5M107 71c3-2 7-2 10 .5" stroke="#4d3d37" stroke-width="1.500" fill="none"/>
<path d="M98 84c3-1 6-1 9 0" stroke="#6d5148" stroke-width="1.200" fill="none"/>
</g>
</g></svg><div style="position:absolute;left:872px;top:141px;width:20px;height:20px;background:rgba(110,112,112,.85);"><svg style="position:absolute;left:0px;top:0px;" width="20" height="20" viewBox="0 0 20 20"><path d="M4.500 4.500L8 8M4.500 4.500H7.500M4.500 4.500V7.500M15.500 4.500L12 8M15.500 4.500H12.500M15.500 4.500V7.500M4.500 15.500L8 12M4.500 15.500H7.500M4.500 15.500V12.500M15.500 15.500L12 12M15.500 15.500H12.500M15.500 15.500V12.500" stroke="#fff" stroke-width="1.400" fill="none" stroke-linecap="round"/></svg></div><div style="position:absolute;left:1044px;top:141px;width:20px;height:20px;background:rgba(40,30,40,.55);"><svg style="position:absolute;left:0px;top:0px;" width="20" height="20" viewBox="0 0 20 20"><path d="M4.500 4.500L8 8M4.500 4.500H7.500M4.500 4.500V7.500M15.500 4.500L12 8M15.500 4.500H12.500M15.500 4.500V7.500M4.500 15.500L8 12M4.500 15.500H7.500M4.500 15.500V12.500M15.500 15.500L12 12M15.500 15.500H12.500M15.500 15.500V12.500" stroke="#fff" stroke-width="1.400" fill="none" stroke-linecap="round"/></svg></div><div style="position:absolute;left:733.5px;top:244px;width:73.5px;height:12px;background:rgba(60,60,60,.78);border-radius:1px"></div><span class="t" style="left:739.5px;top:244px;transform:scaleX(0.8133);font:700 9.4px 'Liberation Sans',sans-serif;color:#fff;">Mustafa KALAY</span><svg style="position:absolute;left:799px;top:247px;" width="8" height="7" viewBox="0 0 8 7"><path d="M2.300 2.600L4 4.200L5.700 2.600" fill="none" stroke="#fff" stroke-width="1.100" stroke-linecap="round" stroke-linejoin="round"/></svg><div style="position:absolute;left:905.3px;top:244px;width:118.5px;height:12px;background:rgba(50,50,50,.78);border-radius:1px"></div><span class="t" style="left:911px;top:244px;transform:scaleX(0.8536);font:700 9.4px 'Liberation Sans',sans-serif;color:#fff;">Prof Dr Zeki TEKİN (Rekt...</span><svg style="position:absolute;left:1014px;top:247px;" width="8" height="7" viewBox="0 0 8 7"><path d="M2.300 2.600L4 4.200L5.700 2.600" fill="none" stroke="#fff" stroke-width="1.100" stroke-linecap="round" stroke-linejoin="round"/></svg><div style="position:absolute;left:878px;top:243px;width:14px;height:14px;background:#e0262c;border-radius:50%"><svg style="position:absolute;left:2px;top:2px;" width="10" height="10" viewBox="0 0 10 10"><rect x="3.800" y="1.200" width="2.400" height="4.400" rx="1.200" fill="#fff"/><path d="M2.300 4.800v.4a2.700 2.700 0 0 0 5.400 0v-.4M5 8v1" fill="none" stroke="#fff" stroke-width=".9" stroke-linecap="round"/><path d="M1.500 8.800L8.500 1.200" stroke="#fff" stroke-width="1.100" stroke-linecap="round"/></svg></div><div style="position:absolute;left:1050px;top:243px;width:14px;height:14px;background:#1a9a8c;border-radius:50%"><svg style="position:absolute;left:2px;top:2px;" width="10" height="10" viewBox="0 0 10 10"><path d="M1.800 6.500V5a3.200 3.200 0 0 1 6.400 0v1.500" fill="none" stroke="#fff" stroke-width="1.100"/><rect x="1.200" y="5.300" width="1.800" height="3" rx=".7" fill="#fff"/><rect x="7" y="5.300" width="1.800" height="3" rx=".7" fill="#fff"/></svg></div><section><div style="position:absolute;left:437px;top:270.3px;width:921px;height:497.8px;background:#fff;"></div><div style="position:absolute;left:438.2px;top:270.3px;width:919.8px;height:496.6px;background:#e6e6e6;"></div><div style="position:absolute;left:438.2px;top:270.3px;width:919.8px;height:18.7px;background:#e8e8e8;"></div><div style="position:absolute;left:438.2px;top:289px;width:919.8px;height:38px;background:#f7f7f7;"></div><div style="position:absolute;left:0;top:0;width:1600px;height:861px;filter:blur(.3px);will-change:transform"><div style="position:absolute;left:438.2px;top:327px;width:919.8px;height:440px;background:#e6e6e6;"></div><div style="position:absolute;left:1348.3px;top:327px;width:9.7px;height:440px;background:#fafafa;"></div><svg style="position:absolute;left:1350.5px;top:330px;" width="6" height="4" viewBox="0 0 6 4"><path d="M.5 3.500L3 .8L5.500 3.500Z" fill="#777"/></svg><svg style="position:absolute;left:1350.5px;top:761px;" width="6" height="4" viewBox="0 0 6 4"><path d="M.5 .5L3 3.200L5.500 .5Z" fill="#777"/></svg><div style="position:absolute;left:1350.2px;top:686px;width:3.8px;height:21.7px;background:#777;border-radius:1.900px"></div><div style="position:absolute;left:656px;top:327px;width:476px;height:28.5px;background:#fff;box-shadow:0 0 2px rgba(0,0,0,.12)"></div><div style="position:absolute;left:1080px;top:322px;width:30px;height:8px;background:transparent;overflow:hidden"></div><div style="position:absolute;left:656px;top:364px;width:476px;height:404px;background:#fff;box-shadow:0 0 2px rgba(0,0,0,.12)"></div><svg style="position:absolute;left:670px;top:383.5px;" width="38" height="38" viewBox="0 0 38 38"><circle cx="19" cy="19" r="18" fill="#fff" stroke="#4a4040" stroke-width=".8"/><path d="M6.500 27.800A15.300 15.300 0 1 1 31.500 27.800" fill="none" stroke="#d9434a" stroke-width="2.400" stroke-dasharray="1.300 .9" opacity=".6"/><circle cx="19.500" cy="18.900" r="12.100" fill="#e3000f"/><path d="M12 17.500c2.500-2.500 5-2.500 6.500-.8s3 1.600 4.800-.9c1-1 2.400-1 3.300-.2M14.500 20c3 1 7 .6 10.500-2" fill="none" stroke="#86090f" stroke-width=".9"/><text x="19" y="35.300" font-family="Liberation Sans, sans-serif" font-size="3.600" font-weight="700" fill="#d9434a" text-anchor="middle" opacity=".8">2006</text></svg><span class="t" style="left:713px;top:382.7px;transform:scaleX(0.9167);font:400 8px 'Liberation Sans',sans-serif;color:#222;-webkit-text-stroke:.22px #222;">T.C</span><span class="t" style="left:713px;top:393.8px;transform:scaleX(0.8823);font:400 8px 'Liberation Sans',sans-serif;color:#222;-webkit-text-stroke:.22px #222;">YOZGAT BOZOK ÜNİVERSİTESİ REKTÖRLÜĞÜ</span><span class="t" style="left:713px;top:404.2px;transform:scaleX(1.0155);font:400 8px 'Liberation Sans',sans-serif;color:#222;-webkit-text-stroke:.22px #222;">Stratejik Yönetim ve Kalite Koordinatörlüğü</span><div style="position:absolute;left:1092.3px;top:364.5px;width:1px;height:35.5px;background:#1f2f6b;"></div><div style="position:absolute;left:1092px;top:399.5px;width:3.3px;height:21.3px;background:#0d2266;"></div><div class="t" style="left:1104.600px;top:420.600px;transform-origin:0 0;transform:rotate(-90deg) scaleX(.76);font:700 14px 'Liberation Sans',sans-serif;color:#c0181c;line-height:11px;height:11px">SYKK</div><div style="position:absolute;left:1078px;top:327px;width:32px;height:3.2px;background:transparent;overflow:hidden"><div class="t" style="left:2px;top:-5.300px;font:400 8px 'Liberation Sans',sans-serif;color:#222">Sayfa 9</div></div><span class="t" style="left:712.6px;top:434.3px;transform:scaleX(0.9124);font:700 9.2px 'Liberation Sans',sans-serif;color:#2f4a8c;-webkit-text-stroke:.22px #2f4a8c;">4.</span><span class="t" style="left:727.5px;top:434.3px;transform:scaleX(0.9229);font:700 9.2px 'Liberation Sans',sans-serif;color:#2f4a8c;-webkit-text-stroke:.22px #2f4a8c;">HEDEFLER</span><span class="t" style="left:712.6px;top:449.2px;transform:scaleX(1.0093);font:400 8px 'Liberation Sans',sans-serif;color:#222;-webkit-text-stroke:.22px #222;">Üniversitemiz 2022-2026 Stratejik Planında yer alan “Üniversite insan kaynaklarının niteliksel yetkinlikleri</span><span class="t" style="left:712.6px;top:461.7px;transform:scaleX(1.0009);font:400 8px 'Liberation Sans',sans-serif;color:#222;white-space:pre;-webkit-text-stroke:.22px #222;">ve  memnuniyet  düzeyleri  artırılacaktır”  hedefi  doğrultusunda  akademik  personel  memnuniyet  düzeyi</span><span class="t" style="left:712.6px;top:474px;transform:scaleX(1.0464);font:400 8px 'Liberation Sans',sans-serif;color:#222;-webkit-text-stroke:.22px #222;">takip edilmektedir.</span><span class="t" style="left:712.6px;top:492.7px;transform:scaleX(0.9871);font:700 8px 'Liberation Sans',sans-serif;color:#111;-webkit-text-stroke:.22px #111;">Tablo-6</span><span class="t" style="left:712.6px;top:509.2px;transform:scaleX(1.0036);font:italic 400 8px 'Liberation Sans',sans-serif;color:#222;-webkit-text-stroke:.22px #222;">Akademik Personel Memnuniyet Hedefleri</span><div style="position:absolute;left:712.3px;top:525.3px;width:100.10000000000002px;height:33.5px;background:#03256c;"></div><div style="position:absolute;left:812.4px;top:525.3px;width:272.19999999999993px;height:33.5px;background:#c30004;"></div><div style="position:absolute;left:712.3px;top:558.8px;width:372.29999999999995px;height:24.0px;background:#fff;"></div><div style="position:absolute;left:711.8px;top:525.3px;width:1px;height:58.0px;background:#111;"></div><div style="position:absolute;left:811.9px;top:525.3px;width:1px;height:58.0px;background:#111;"></div><div style="position:absolute;left:902.9px;top:525.3px;width:1px;height:58.0px;background:#111;"></div><div style="position:absolute;left:992.8px;top:525.3px;width:1px;height:58.0px;background:#111;"></div><div style="position:absolute;left:1084.1px;top:525.3px;width:1px;height:58.0px;background:#111;"></div><div style="position:absolute;left:711.8px;top:524.8px;width:373.29999999999995px;height:1px;background:#111;"></div><div style="position:absolute;left:711.8px;top:558.3px;width:373.29999999999995px;height:1px;background:#111;"></div><div style="position:absolute;left:711.8px;top:570.0px;width:373.29999999999995px;height:1px;background:#111;"></div><div style="position:absolute;left:711.8px;top:582.3px;width:373.29999999999995px;height:1px;background:#111;"></div><span class="t" style="left:750.5999999999999px;top:538.8px;transform:scaleX(1.0280);font:700 7px 'Liberation Sans',sans-serif;color:#dfe6f5;-webkit-text-stroke:.22px #dfe6f5;">Dönem</span><span class="t" style="left:823.8px;top:533px;transform:scaleX(1.0044);font:700 7px 'Liberation Sans',sans-serif;color:#ffe9e9;-webkit-text-stroke:.22px #ffe9e9;">Stratejik Plan Hedefi</span><span class="t" style="left:852.55px;top:544.4px;transform:scaleX(0.9641);font:700 7px 'Liberation Sans',sans-serif;color:#ffe9e9;-webkit-text-stroke:.22px #ffe9e9;">(%)</span><span class="t" style="left:927.9px;top:528px;transform:scaleX(0.9842);font:700 7px 'Liberation Sans',sans-serif;color:#ffe9e9;-webkit-text-stroke:.22px #ffe9e9;">Gerçekleşen</span><span class="t" style="left:916.65px;top:539.2px;transform:scaleX(1.0397);font:700 7px 'Liberation Sans',sans-serif;color:#ffe9e9;-webkit-text-stroke:.22px #ffe9e9;">Memnuniyet Oranı</span><span class="t" style="left:943.15px;top:550.2px;transform:scaleX(0.9641);font:700 7px 'Liberation Sans',sans-serif;color:#ffe9e9;-webkit-text-stroke:.22px #ffe9e9;">(%)</span><span class="t" style="left:1031.65px;top:539.2px;transform:scaleX(0.9799);font:700 7px 'Liberation Sans',sans-serif;color:#ffe9e9;-webkit-text-stroke:.22px #ffe9e9;">Fark</span><span class="t" style="left:717.3px;top:560.3px;transform:scaleX(0.9588);font:400 7.5px 'Liberation Sans',sans-serif;color:#222;-webkit-text-stroke:.22px #222;">2023</span><span class="t" style="left:717.3px;top:572.5px;transform:scaleX(0.9588);font:400 7.5px 'Liberation Sans',sans-serif;color:#222;-webkit-text-stroke:.22px #222;">2024</span><span class="t" style="left:853.8px;top:560.3px;transform:scaleX(0.9588);font:400 7.5px 'Liberation Sans',sans-serif;color:#222;-webkit-text-stroke:.22px #222;">69</span><span class="t" style="left:853.8px;top:572.5px;transform:scaleX(0.9588);font:400 7.5px 'Liberation Sans',sans-serif;color:#222;-webkit-text-stroke:.22px #222;">72</span><span class="t" style="left:939.15px;top:560.3px;transform:scaleX(0.9850);font:400 7.5px 'Liberation Sans',sans-serif;color:#222;-webkit-text-stroke:.22px #222;">70,06</span><span class="t" style="left:939.15px;top:572.5px;transform:scaleX(0.9850);font:400 7.5px 'Liberation Sans',sans-serif;color:#222;-webkit-text-stroke:.22px #222;">69,80</span><span class="t" style="left:1028.9px;top:560.3px;transform:scaleX(0.9496);font:400 7.5px 'Liberation Sans',sans-serif;color:#222;-webkit-text-stroke:.22px #222;">+ 1,06</span><span class="t" style="left:1029.4px;top:572.5px;transform:scaleX(0.9902);font:400 7.5px 'Liberation Sans',sans-serif;color:#222;-webkit-text-stroke:.22px #222;">- 2,20</span><span class="t" style="left:712.6px;top:603.6px;transform:scaleX(1.0141);font:400 8px 'Liberation Sans',sans-serif;color:#222;-webkit-text-stroke:.22px #222;">2024 yılı akademik personel memnuniyet oranı stratejik plan hedefinin altında gerçekleşmiştir. Akademik</span><span class="t" style="left:712.6px;top:615.3px;transform:scaleX(1.0021);font:400 8px 'Liberation Sans',sans-serif;color:#222;-webkit-text-stroke:.22px #222;">personel memnuniyet düzeyinde %2,20 oranında sapma yaşanmıştır.</span><span class="t" style="left:712.6px;top:638.3px;transform:scaleX(0.9646);font:700 9.2px 'Liberation Sans',sans-serif;color:#2f4a8c;-webkit-text-stroke:.22px #2f4a8c;">5.</span><span class="t" style="left:727px;top:638.3px;transform:scaleX(0.9582);font:700 9.2px 'Liberation Sans',sans-serif;color:#2f4a8c;-webkit-text-stroke:.22px #2f4a8c;">ÖNERİLER</span><span class="t" style="left:712.6px;top:653.1px;transform:scaleX(1.0045);font:400 8px 'Liberation Sans',sans-serif;color:#222;-webkit-text-stroke:.22px #222;">2024 yılı akademik personel memnuniyet anketi sonucunda aşağıdaki önerilere ulaşılmıştır.</span><div style="position:absolute;left:727.6px;top:675.4px;width:2.8px;height:2.8px;background:#111;border-radius:50%"></div><span class="t" style="left:741.7px;top:671.9px;transform:scaleX(1.0050);font:400 8px 'Liberation Sans',sans-serif;color:#222;white-space:pre;-webkit-text-stroke:.22px #222;">Akademik Personel memnuniyet anketine katılımın artması için farkındalık çalışmaları yapılabilir.</span><div style="position:absolute;left:727.6px;top:688.8px;width:2.8px;height:2.8px;background:#111;border-radius:50%"></div><span class="t" style="left:741.7px;top:685.3px;transform:scaleX(0.9978);font:400 8px 'Liberation Sans',sans-serif;color:#222;white-space:pre;-webkit-text-stroke:.22px #222;">Üniversitemizde yer alan kültürel, sanatsal ve sportif faaliyetlerin sayısında ve verimliliğinde artışa</span><span class="t" style="left:741.7px;top:697.1px;transform:scaleX(1.0302);font:400 8px 'Liberation Sans',sans-serif;color:#222;white-space:pre;-webkit-text-stroke:.22px #222;">gidilebilir.</span><div style="position:absolute;left:727.6px;top:713.5px;width:2.8px;height:2.8px;background:#111;border-radius:50%"></div><span class="t" style="left:741.7px;top:710px;transform:scaleX(0.9864);font:400 8px 'Liberation Sans',sans-serif;color:#222;white-space:pre;-webkit-text-stroke:.22px #222;">Akademik  personellere  yönelik  bilimsel  araştırma  bütçeleri  yeniden  gözden  geçirilerek  destek</span><span class="t" style="left:741.7px;top:722.5px;transform:scaleX(1.0242);font:400 8px 'Liberation Sans',sans-serif;color:#222;white-space:pre;-webkit-text-stroke:.22px #222;">tutarlarında artışa gidilebilir.</span><div style="position:absolute;left:727.6px;top:738.1px;width:2.8px;height:2.8px;background:#111;border-radius:50%"></div><span class="t" style="left:741.7px;top:734.6px;transform:scaleX(1.0186);font:400 8px 'Liberation Sans',sans-serif;color:#222;white-space:pre;-webkit-text-stroke:.22px #222;">Yemek sunumuna ilişkin fiziki altyapılara yönelik iyileştirici faaliyetler planlanabilir.</span><svg style="position:absolute;left:853.5px;top:722.5px;" width="7" height="11" viewBox="0 0 7 11"><path d="M1 .8V8.200L2.800 6.600L4 9.600L5.200 9.100L4 6.200H6.300Z" fill="#fff" stroke="#222" stroke-width=".7" stroke-linejoin="round"/></svg><div style="position:absolute;left:1331px;top:739.6px;width:11px;height:11.1px;background:#dba29c;border-radius:1.500px"><svg style="position:absolute;left:1.5px;top:1.5px;" width="8" height="8" viewBox="0 0 8 8"><path d="M1 7c1.500-1 2.600-3.400 3-6 .3 2.500 1.500 4.400 3.300 5-2 .1-4.300.4-6.300 1z" fill="none" stroke="#fff" stroke-width="1" stroke-linejoin="round"/></svg></div><div style="position:absolute;left:438.2px;top:270.3px;width:919.8px;height:18.7px;background:#e8e8e8;"></div><div style="position:absolute;left:438.2px;top:289px;width:919.8px;height:38.5px;background:#f7f7f7;"></div><div style="position:absolute;left:438.2px;top:308.5px;width:919.8px;height:1px;background:#ececec;"></div><div style="position:absolute;left:438.2px;top:326.5px;width:919.8px;height:1px;background:#dedede;"></div><div style="position:absolute;left:439.8px;top:272px;width:15.2px;height:15px;background:#dddddd;border-radius:3px"></div><svg style="position:absolute;left:443px;top:276px;" width="9" height="8" viewBox="0 0 9 8"><g fill="none" stroke="#505050" stroke-width="1.1" stroke-linecap="round" stroke-linejoin="round"><rect x=".7" y=".7" width="7.400" height="6.400" rx="1"/><path d="M.7 2.600H8.100M3 2.600V7"/></g></svg><div style="position:absolute;left:457.5px;top:272px;width:115px;height:17px;background:#f7f7f7;border-radius:4px 4px 0 0"></div><svg style="position:absolute;left:460.5px;top:276px;" width="7" height="8" viewBox="0 0 7 8"><rect x=".5" y=".5" width="1.600" height="7" fill="#5aa7e6"/><path d="M3 1.200h3.500M3 4h3.500M3 6.800h3.500" stroke="#b9cde0" stroke-width=".9"/></svg><span class="t" style="left:473px;top:276.6px;transform:scaleX(0.8727);font:400 6.5px 'Liberation Sans',sans-serif;color:#666;">1880f833-f.pdf</span><svg style="position:absolute;left:561px;top:277.2px;" width="6" height="6" viewBox="0 0 6 6"><g fill="none" stroke="#5a5a5a" stroke-width="0.9" stroke-linecap="round" stroke-linejoin="round"><path d="M1 1L5 5M5 1L1 5"/></g></svg><svg style="position:absolute;left:578px;top:276.7px;" width="7" height="7" viewBox="0 0 7 7"><g fill="none" stroke="#555" stroke-width="0.8" stroke-linecap="round" stroke-linejoin="round"><path d="M3.500 .5V6.500M.5 3.500H6.500"/></g></svg><svg style="position:absolute;left:1300px;top:279.5px;" width="6" height="2" viewBox="0 0 6 2"><g fill="none" stroke="#bbb" stroke-width="0.7" stroke-linecap="round" stroke-linejoin="round"><path d="M.5 1H5.500"/></g></svg><svg style="position:absolute;left:1321px;top:277px;" width="6" height="6" viewBox="0 0 6 6"><g fill="none" stroke="#bbb" stroke-width="0.6" stroke-linecap="round" stroke-linejoin="round"><rect x=".8" y="1.500" width="3.700" height="3.700"/><path d="M2 1.500V.7H5.300V4H4.500"/></g></svg><svg style="position:absolute;left:1344px;top:277px;" width="6" height="6" viewBox="0 0 6 6"><g fill="none" stroke="#aaa" stroke-width="0.7" stroke-linecap="round" stroke-linejoin="round"><path d="M.8 .8L5.200 5.200M5.200 .8L.8 5.200"/></g></svg><svg style="position:absolute;left:443px;top:295.5px;" width="9" height="7" viewBox="0 0 9 7"><g fill="none" stroke="#5a5a5a" stroke-width="1" stroke-linecap="round" stroke-linejoin="round"><path d="M8 3.500H1.200M3.800 .8L1 3.500L3.800 6.200"/></g></svg><svg style="position:absolute;left:460px;top:295px;" width="9" height="8" viewBox="0 0 9 8"><g fill="none" stroke="#5a5a5a" stroke-width="1" stroke-linecap="round" stroke-linejoin="round"><path d="M7.300 4A3 3 0 1 1 6.300 1.800"/><path d="M7.400 .6V2.400H5.600"/></g></svg><div style="position:absolute;left:474.8px;top:292px;width:760px;height:14px;background:#fff;border-radius:7px;box-shadow:0 0 1px #cfcfcf"></div><svg style="position:absolute;left:479px;top:295.2px;" width="7" height="8" viewBox="0 0 7 8"><g fill="none" stroke="#505050" stroke-width="0.9" stroke-linecap="round" stroke-linejoin="round"><rect x="1" y="3.200" width="5" height="4" rx=".8"/><path d="M2.200 3.200V2.200a1.300 1.300 0 0 1 2.600 0v1"/><circle cx="3.500" cy="5.200" r=".4"/></g></svg><span class="t" style="left:489px;top:294.6px;transform:scaleX(0.9208);font:400 7.5px 'Liberation Sans',sans-serif;color:#555;"><span style="color:#555">https://</span><span style="color:#222">kalite.bozok.edu.tr</span><span style="color:#666">/file/1880f833-f.pdf</span></span><svg style="position:absolute;left:1209.5px;top:295px;" width="9" height="8" viewBox="0 0 9 8"><g fill="none" stroke="#777" stroke-width="0.7" stroke-linecap="round" stroke-linejoin="round"><circle cx="3.600" cy="3.600" r="2.800"/><path d="M5.700 5.700L8 7.500M2.300 3.600H4.900"/></g></svg><svg style="position:absolute;left:1223.5px;top:294.5px;" width="9" height="9" viewBox="0 0 9 9"><g fill="none" stroke="#666" stroke-width="0.7" stroke-linecap="round" stroke-linejoin="round"><path d="M4.500 .9L5.600 3.400L8.300 3.700L6.300 5.500L6.900 8.200L4.500 6.800L2.100 8.200L2.700 5.500L.7 3.700L3.400 3.400Z"/></g></svg><svg style="position:absolute;left:1241px;top:294.5px;" width="10" height="9" viewBox="0 0 10 9"><g fill="none" stroke="#5a5a5a" stroke-width="0.9" stroke-linecap="round" stroke-linejoin="round"><path d="M8 4.500A3.300 3.300 0 1 1 6.900 2"/><path d="M8.200 .8V2.800H6.200"/><path d="M4 4.500h2"/></g></svg><div style="position:absolute;left:1255px;top:294px;width:1px;height:10px;background:#dcdcdc;"></div><svg style="position:absolute;left:1260px;top:294.5px;" width="11" height="9" viewBox="0 0 11 9"><g fill="none" stroke="#505050" stroke-width="0.8" stroke-linecap="round" stroke-linejoin="round"><path d="M4.200 .9L5.200 3.300L7.800 3.600L5.900 5.300L6.400 7.900L4.200 6.600L2 7.900L2.500 5.300L.6 3.600L3.200 3.300Z"/><path d="M7.500 5h3M8 7h2.500"/></g></svg><div style="position:absolute;left:1276.5px;top:293.5px;width:11px;height:11px;background:#b8b8b8;border-radius:50%;overflow:hidden"><div style="position:absolute;left:3.5px;top:2px;width:4px;height:4px;background:#8d8d8d;border-radius:50%"></div><div style="position:absolute;left:1.5px;top:6.8px;width:8px;height:6px;background:#8d8d8d;border-radius:50%"></div></div><div style="position:absolute;left:1284.5px;top:293.3px;width:3px;height:3px;background:#e02020;border-radius:50%"></div><div style="position:absolute;left:1295.5px;top:298.4px;width:1.3px;height:1.3px;background:#333;border-radius:50%"></div><div style="position:absolute;left:1298.5px;top:298.4px;width:1.3px;height:1.3px;background:#333;border-radius:50%"></div><div style="position:absolute;left:1301.5px;top:298.4px;width:1.3px;height:1.3px;background:#333;border-radius:50%"></div><div style="position:absolute;left:1309.5px;top:293px;width:44.5px;height:12.5px;background:#ededed;border-radius:6px"></div><div style="position:absolute;left:1312.5px;top:294.3px;width:10px;height:10px;background:conic-gradient(from 200deg,#2f7de1,#37c6d0,#f4c430,#f06a3a,#c84fd8,#2f7de1);border-radius:45% 55% 50% 50%"></div><div style="position:absolute;left:1315.8px;top:297.3px;width:3.4px;height:4px;background:#fff;border-radius:40%;transform:skewX(-12deg)"></div><span class="t" style="left:1326px;top:295.6px;transform:scaleX(0.8624);font:400 6.5px 'Liberation Sans',sans-serif;color:#222;">Sohbet et</span><svg style="position:absolute;left:445.5px;top:314.5px;" width="10" height="8" viewBox="0 0 10 8"><g fill="none" stroke="#555" stroke-width="1" stroke-linecap="round" stroke-linejoin="round"><path d="M.8 1.200h.2M3 1.200h6M3 4h5M.8 4h.2M3 6.800h6M.8 6.800h.2"/></g></svg><div style="position:absolute;left:460px;top:313px;width:1px;height:11px;background:#d0d0d0;"></div><svg style="position:absolute;left:466.5px;top:314.0px;" width="10" height="9" viewBox="0 0 10 9"><g fill="none" stroke="#5a5a5a" stroke-width="1" stroke-linecap="round" stroke-linejoin="round"><path d="M1 1L3 7.500H6L8.500 1M1.800 3.500H7.600M3.500 7.500L4.500 5.500L5.800 7.500"/></g></svg><svg style="position:absolute;left:481px;top:317px;" width="6" height="4" viewBox="0 0 6 4"><g fill="none" stroke="#777" stroke-width="0.8" stroke-linecap="round" stroke-linejoin="round"><path d="M1 1L3 3L5 1"/></g></svg><svg style="position:absolute;left:499px;top:314.0px;" width="9" height="9" viewBox="0 0 9 9"><g fill="none" stroke="#5a5a5a" stroke-width="1" stroke-linecap="round" stroke-linejoin="round"><path d="M1 1L4.500 8L8 1M3 5.200H6"/></g></svg><span class="t" style="left:513px;top:315.5px;transform:scaleX(0.8395);font:400 7px 'Liberation Sans',sans-serif;color:#3a3a3a;">Çiz</span><svg style="position:absolute;left:528.5px;top:317px;" width="6" height="4" viewBox="0 0 6 4"><g fill="none" stroke="#777" stroke-width="0.8" stroke-linecap="round" stroke-linejoin="round"><path d="M1 1L3 3L5 1"/></g></svg><svg style="position:absolute;left:543.5px;top:314.0px;" width="10" height="9" viewBox="0 0 10 9"><g fill="none" stroke="#5a5a5a" stroke-width="0.9" stroke-linecap="round" stroke-linejoin="round"><path d="M5.500 1L9 4.500L5.500 8H3L1 6Z M3.200 3.400L6.600 6.800M2 8.300H8"/></g></svg><div style="position:absolute;left:558.5px;top:313px;width:1px;height:11px;background:#d0d0d0;"></div><svg style="position:absolute;left:564.5px;top:314.5px;" width="10" height="8" viewBox="0 0 10 8"><g fill="none" stroke="#505050" stroke-width="1.1" stroke-linecap="round" stroke-linejoin="round"><rect x=".8" y=".8" width="8.400" height="6.400" rx=".8"/><path d="M4 .8V7.200M1.800 2.600h1.200"/></g></svg><div style="position:absolute;left:580.5px;top:313px;width:1px;height:11px;background:#d0d0d0;"></div><svg style="position:absolute;left:587px;top:314.0px;" width="10" height="9" viewBox="0 0 10 9"><g fill="none" stroke="#5a5a5a" stroke-width="0.9" stroke-linecap="round" stroke-linejoin="round"><path d="M.8 8L3.300 1.500L5.800 8M1.700 5.800H4.900M7 1.200L8.200 .5L9.200 1.800M8.200 .6V3.500"/></g></svg><div style="position:absolute;left:602.5px;top:313px;width:1px;height:11px;background:#d0d0d0;"></div><span class="t" style="left:607.5px;top:312.5px;transform:scaleX(0.8568);font:700 7.5px 'Liberation Sans','Noto Sans CJK JP',sans-serif;color:#444;">aあ</span><div style="position:absolute;left:623px;top:313px;width:1px;height:11px;background:#d0d0d0;"></div><svg style="position:absolute;left:630.5px;top:313.5px;" width="10" height="10" viewBox="0 0 10 10"><g fill="none" stroke="#5a5a5a" stroke-width="0.8" stroke-linecap="round" stroke-linejoin="round"><circle cx="5" cy="5" r="4"/><path d="M5 1v4l-3 2.500M5 5l3.500 1.500M5 5c1.500-1 2.500-2 2.500-3"/></g></svg><span class="t" style="left:644px;top:315.5px;transform:scaleX(0.9784);font:400 7px 'Liberation Sans',sans-serif;color:#3a3a3a;">Copilot'a Sor</span><svg style="position:absolute;left:687px;top:317px;" width="6" height="4" viewBox="0 0 6 4"><g fill="none" stroke="#777" stroke-width="0.8" stroke-linecap="round" stroke-linejoin="round"><path d="M1 1L3 3L5 1"/></g></svg><svg style="position:absolute;left:834.5px;top:317.5px;" width="6" height="2" viewBox="0 0 6 2"><g fill="none" stroke="#666" stroke-width="0.8" stroke-linecap="round" stroke-linejoin="round"><path d="M.5 1H5.500"/></g></svg><svg style="position:absolute;left:851.5px;top:315.5px;" width="6" height="6" viewBox="0 0 6 6"><g fill="none" stroke="#666" stroke-width="0.8" stroke-linecap="round" stroke-linejoin="round"><path d="M3 .5V5.500M.5 3H5.500"/></g></svg><svg style="position:absolute;left:867px;top:314.5px;" width="10" height="8" viewBox="0 0 10 8"><g fill="none" stroke="#5a5a5a" stroke-width="0.9" stroke-linecap="round" stroke-linejoin="round"><rect x=".8" y="1" width="8.400" height="6" rx=".6"/><path d="M2.500 4h5M2.500 4l1-1M2.500 4l1 1M7.500 4l-1-1M7.500 4l-1 1"/></g></svg><div style="position:absolute;left:882px;top:313px;width:1px;height:11px;background:#d0d0d0;"></div><div style="position:absolute;left:885.3px;top:311px;width:19.5px;height:15px;background:#fff;border:1px solid #e2e2e2;border-radius:2px"></div><span class="t" style="left:892.3px;top:315.2px;transform:scaleX(0.8000);font:400 6.5px 'Liberation Sans',sans-serif;color:#5a5a5a;">11</span><span class="t" style="left:909px;top:315.2px;transform:scaleX(1.0144);font:400 6.5px 'Liberation Sans',sans-serif;color:#555;">/ 12</span><div style="position:absolute;left:925.5px;top:313px;width:1px;height:11px;background:#d0d0d0;"></div><svg style="position:absolute;left:931px;top:313.5px;" width="11" height="10" viewBox="0 0 11 10"><g fill="none" stroke="#5a5a5a" stroke-width="0.9" stroke-linecap="round" stroke-linejoin="round"><path d="M2 5A3.500 3.500 0 1 1 6 8.400"/><path d="M.8 3.600L2 5.200L3.600 4"/><path d="M5.500 6.500L7.500 8.800" /></g></svg><div style="position:absolute;left:947.5px;top:313px;width:1px;height:11px;background:#d0d0d0;"></div><svg style="position:absolute;left:953px;top:314.5px;" width="10" height="8" viewBox="0 0 10 8"><g fill="none" stroke="#505050" stroke-width="1" stroke-linecap="round" stroke-linejoin="round"><path d="M1 1.200V6.800M2.800 1.200V6.800"/><path d="M4.500 2.500V6.800H8.800V3.500L7.800 1.200H5.500V3"/></g></svg><svg style="position:absolute;left:1182.5px;top:314.0px;" width="9" height="9" viewBox="0 0 9 9"><g fill="none" stroke="#555" stroke-width="0.9" stroke-linecap="round" stroke-linejoin="round"><circle cx="3.600" cy="3.600" r="2.600"/><path d="M5.600 5.600L8 8"/></g></svg><div style="position:absolute;left:1198px;top:313px;width:1px;height:11px;background:#d0d0d0;"></div><svg style="position:absolute;left:1203.5px;top:314.0px;" width="11" height="9" viewBox="0 0 11 9"><g fill="none" stroke="#505050" stroke-width="1.1" stroke-linecap="round" stroke-linejoin="round"><path d="M2.800 3V1h5.400v2"/><rect x="1" y="3" width="9" height="4" rx="1"/><rect x="3" y="5.500" width="5" height="2.800" fill="#f7f7f7"/></g></svg><svg style="position:absolute;left:1221.5px;top:314.0px;" width="9" height="9" viewBox="0 0 9 9"><g fill="none" stroke="#5a5a5a" stroke-width="0.9" stroke-linecap="round" stroke-linejoin="round"><rect x=".8" y=".8" width="7.400" height="7.400" rx=".8"/><path d="M2.500 .8V3H6V.8M2.500 8.200V5.500H6.500V8.200"/></g></svg><div style="position:absolute;left:1236.5px;top:313px;width:1px;height:11px;background:#d0d0d0;"></div><svg style="position:absolute;left:1243px;top:314.0px;" width="9" height="9" viewBox="0 0 9 9"><g fill="none" stroke="#5a5a5a" stroke-width="0.9" stroke-linecap="round" stroke-linejoin="round"><path d="M1.200 7.800L7.800 1.200M5 1.200H7.800V4M1.200 5.200V7.800H3.800"/></g></svg><svg style="position:absolute;left:1259.5px;top:313.5px;" width="10" height="10" viewBox="0 0 10 10"><g fill="none" stroke="#5a5a5a" stroke-width="0.7" stroke-linecap="round" stroke-linejoin="round"><circle cx="5" cy="5" r="1.500"/><path d="M5 1l1 1.200 1.600-.3.500 1.500L9.500 4.200 9 5.800l.4 1.500-1.500.6-.5 1.500-1.600-.3L5 9.800 3.800 8.900l-1.600.3-.5-1.500L.4 6.900.9 5.400.5 3.900 2 3.300l.5-1.500 1.600.3z"/></g></svg><div style="position:absolute;left:1275.5px;top:313px;width:1px;height:11px;background:#d0d0d0;"></div><span class="t" style="left:1284px;top:314.7px;transform:scaleX(0.9489);font:400 7px 'Liberation Sans',sans-serif;color:#3a3a3a;">Acrobat ile düzenleyin</span></div><div style="position:absolute;left:437px;top:768.1px;width:921px;height:3.8px;background:#000;"></div></section><div style="position:absolute;left:1581.3px;top:272.5px;width:18.7px;height:17.8px;background:#141f2c;border-radius:1px"></div><svg style="position:absolute;left:1584.4px;top:275.9px;" width="13.2" height="12.3" viewBox="0 0 13.2 12.3"><path d="M0.4 0.4h3.9l-3.9 3.9z" fill="#fff"/><path d="M1.6 1.6L5.7 5.300000000000001" stroke="#fff" stroke-width="1.400"/><path d="M12.8 0.4h-3.9l3.9 3.9z" fill="#fff"/><path d="M11.600000000000001 1.6L7.500000000000001 5.300000000000001" stroke="#fff" stroke-width="1.400"/><path d="M0.4 11.9h3.9l-3.9 -3.9z" fill="#fff"/><path d="M1.6 10.700000000000001L5.7 7.0" stroke="#fff" stroke-width="1.400"/><path d="M12.8 11.9h-3.9l3.9 -3.9z" fill="#fff"/><path d="M11.600000000000001 10.700000000000001L7.500000000000001 7.0" stroke="#fff" stroke-width="1.400"/></svg><div style="position:absolute;left:806px;top:782px;width:36px;height:36px;background:#1b73e0;border-radius:50%"></div><svg style="position:absolute;left:814.8px;top:791.5px;" width="18.4" height="17" viewBox="0 0 18.4 17"><path d="M3 11V8.800a6.200 6.200 0 0 1 12.400 0V11" fill="none" stroke="#fff" stroke-width="1.700"/><rect x="1.900" y="8.700" width="3.300" height="6" rx="1.600" fill="none" stroke="#fff" stroke-width="1.400"/><rect x="13.200" y="8.700" width="3.300" height="6" rx="1.600" fill="none" stroke="#fff" stroke-width="1.400"/></svg><div style="position:absolute;left:830.3px;top:804.3px;width:13.6px;height:13.6px;background:#fff;border-radius:50%;border:1.300px solid #06172a"><svg style="position:absolute;left:1.5px;top:1.7px;" width="8" height="8" viewBox="0 0 8 8"><path d="M1.600 5L4 2.800L6.400 5" fill="none" stroke="#666" stroke-width="1.100" stroke-linecap="round" stroke-linejoin="round"/></svg></div><div style="position:absolute;left:858.9px;top:782px;width:35.5px;height:35.5px;background:transparent;border-radius:50%;border:2.300px solid #fff"></div><svg style="position:absolute;left:867px;top:790.5px;" width="19" height="18" viewBox="0 0 19 18"><rect x="2" y="4.800" width="10" height="8" rx=".8" fill="none" stroke="#fff" stroke-width="1.700"/><path d="M13 7.800L17.400 5.300v7.800L13 10.600z" fill="#fff"/><path d="M3 15.800L15.800 2.500" stroke="#06172a" stroke-width="3"/><path d="M3 15.800L15.800 2.500" stroke="#fff" stroke-width="1.500" stroke-linecap="round"/></svg><div style="position:absolute;left:1496px;top:782px;width:36px;height:36px;background:#1b73e0;border-radius:50%"></div><svg style="position:absolute;left:1506px;top:792px;" width="17" height="15" viewBox="0 0 17 15"><rect x="2" y="1.900" width="12.400" height="8.700" rx="1" fill="none" stroke="#fff" stroke-width="1.700"/><path d="M5.200 12.800h6" stroke="#fff" stroke-width="1.500" stroke-linecap="round"/></svg><div style="position:absolute;left:1548.9px;top:782.2px;width:35.5px;height:35.5px;background:transparent;border-radius:50%;border:2.300px solid #fff"></div><svg style="position:absolute;left:1558.5px;top:790px;" width="18" height="19" viewBox="0 0 18 19"><path d="M6.200 9.500V4a1 1 0 0 1 2 0V2.900a1 1 0 0 1 2 0V4a1 1 0 0 1 2 0v1.300a1 1 0 0 1 2 0V12c0 3-2 4.800-4.600 4.800-2.100 0-3.300-.9-4.300-2.800L2.800 10.800c-.5-1 .8-1.800 1.600-.9L6.200 12z" fill="none" stroke="#fff" stroke-width="1.300" stroke-linejoin="round"/><path d="M8.200 4v5M10.200 4v5M12.200 5.300v4" stroke="#fff" stroke-width="1" opacity=".9"/></svg></main><footer><div style="position:absolute;left:0px;top:827px;width:1600px;height:34px;background:linear-gradient(90deg,#dbe5f1 0%,#dde5f1 17%,#e5e6f1 25%,#e1e6f1 32%,#dde6f1 45%,#dee5f1 75%,#dce3ef 100%);border-top:1px solid #c9ced6"></div><div style="position:absolute;left:10.4px;top:837.5px;width:16.8px;height:16.8px;background:radial-gradient(circle at 40% 35%,#ffb62e,#f68a1f 70%,#f0741e);border-radius:50%"></div><div style="position:absolute;left:18.3px;top:832.3px;width:13px;height:13px;background:#d3261f;border-radius:50%"></div><span class="t" style="left:22.4px;top:834.3px;transform:scaleX(0.9969);font:700 9px 'Liberation Sans',sans-serif;color:#fff;">2</span><span class="t" style="left:35.6px;top:835.4px;transform:scaleX(0.9866);font:400 9.3px 'Liberation Sans',sans-serif;color:#1f1f1f;">3°C</span><span class="t" style="left:35.6px;top:848px;transform:scaleX(0.9733);font:400 10px 'Liberation Sans',sans-serif;color:#555;">Güneşli</span><svg style="position:absolute;left:529px;top:837px;" width="19.5" height="19.5" viewBox="0 0 19.5 19.5"><defs><linearGradient id="wg" gradientUnits="userSpaceOnUse" x1="0" y1="0" x2="19.500" y2="19.500"><stop offset="0" stop-color="#5ccbf6"/><stop offset="1" stop-color="#0a6fd6"/></linearGradient></defs><rect x="0" y="0" width="9.300" height="9.300" rx=".6" fill="url(#wg)"/><rect x="10.2" y="0" width="9.300" height="9.300" rx=".6" fill="url(#wg)"/><rect x="0" y="10.2" width="9.300" height="9.300" rx=".6" fill="url(#wg)"/><rect x="10.2" y="10.2" width="9.300" height="9.300" rx=".6" fill="url(#wg)"/></svg><div style="position:absolute;left:560px;top:834px;width:182px;height:25px;background:#f1f4fa;border-radius:12.500px;border:1px solid #d8deea;box-shadow:0 .5px 1px rgba(0,0,0,.08)"></div><svg style="position:absolute;left:569px;top:840px;" width="13" height="14" viewBox="0 0 13 14"><circle cx="5.500" cy="5.800" r="4.200" fill="none" stroke="#222" stroke-width="1.500"/><path d="M8.600 9.100L11.600 12.400" stroke="#222" stroke-width="1.700" stroke-linecap="round"/></svg><span class="t" style="left:590.3px;top:841px;transform:scaleX(0.9326);font:400 11.5px 'Liberation Sans',sans-serif;color:#555;">Ara</span><svg style="position:absolute;left:698.5px;top:836px;" width="42" height="21" viewBox="0 0 42 21"><defs><clipPath id="pc"><ellipse cx="21" cy="11.500" rx="20.500" ry="10"/></clipPath></defs><g clip-path="url(#pc)"><rect width="42" height="21" fill="#dfeaf2"/><ellipse cx="12" cy="9" rx="9" ry="5" fill="#9fbf8a"/><ellipse cx="31" cy="8" rx="9" ry="5" fill="#b7cfa0"/><path d="M4 17L17 5H25L38 17Z" fill="#b9834a"/><path d="M17 5H25L28 17H14Z" fill="#8f5e34"/><path d="M8 13H34M11 10.500H31M14 8H28" stroke="#6e4626" stroke-width=".7"/><path d="M0 16C10 14.500 32 14.500 42 16V21H0Z" fill="#6fae3c"/><path d="M0 18.500C10 17.500 32 17.500 42 18.500V21H0Z" fill="#4f9530"/></g></svg><div style="position:absolute;left:758.5px;top:838px;width:14.5px;height:12.3px;background:linear-gradient(135deg,#ffffff,#d9dde4);border-radius:1.500px;box-shadow:0 0 1px rgba(0,0,0,.2)"></div><div style="position:absolute;left:753.5px;top:843px;width:15px;height:12.8px;background:#242424;border-radius:1.500px"></div><div style="position:absolute;left:758.8px;top:843px;width:9.7px;height:7.3px;background:linear-gradient(135deg,#c9c9c9,#9a9a9a);"></div><svg style="position:absolute;left:789.5px;top:836.5px;" width="22" height="20" viewBox="0 0 22 20"><defs><linearGradient id="cpa" x1=".3" y1="0" x2=".4" y2="1"><stop offset="0" stop-color="#2a86e6"/><stop offset=".38" stop-color="#38c3c4"/><stop offset=".7" stop-color="#c3da45"/><stop offset="1" stop-color="#f7a83a"/></linearGradient><linearGradient id="cpb" x1=".4" y1="0" x2=".5" y2="1"><stop offset="0" stop-color="#2557d6"/><stop offset=".3" stop-color="#8a5cf0"/><stop offset=".58" stop-color="#d95cd6"/><stop offset="1" stop-color="#f4683a"/></linearGradient></defs><path d="M5.800 1.300H12.200c1.700 0 2.300 1.100 1.800 2.700L11.800 11.500c-.5 1.700-1.600 2.700-3.300 2.700H4C1.600 14.200.4 12.600 1.100 10.500L3 4C3.500 2.300 4.300 1.300 5.800 1.300z" fill="url(#cpa)"/><path d="M13.300 1.600c2.400-.6 4 .6 4.600 2.400h.9c2.200 0 3.200 1.600 2.600 3.600L19.500 14c-.6 2-1.700 3.600-3.700 4.400-1.800.7-4.200.5-6.600.1-1.600-.3-2-1.300-1.500-2.900L10.200 6c.6-2.300 1.300-3.900 3.100-4.400z" fill="url(#cpb)"/><path d="M10 8.200L12.300 5.500L11.500 12.800L9 15.200Z" fill="#fff" opacity=".9"/></svg><svg style="position:absolute;left:827px;top:836.5px;" width="22" height="21" viewBox="0 0 22 21"><defs><linearGradient id="eg1" x1="0" y1="0" x2="1" y2="0"><stop offset="0" stop-color="#1e8fd8"/><stop offset=".6" stop-color="#35c1c9"/><stop offset="1" stop-color="#6ad24a"/></linearGradient><linearGradient id="eg2" x1="0" y1="0" x2="0" y2="1"><stop offset="0" stop-color="#1b7fd4"/><stop offset="1" stop-color="#0e4fa8"/></linearGradient></defs><circle cx="11" cy="10.500" r="10" fill="url(#eg2)"/><path d="M1.200 9C2 4 6 .6 11 .6c5.500 0 10 4 10 8.600 0 3.200-2.300 5-4.800 5-2 0-3.300-.8-3.300-2 0-.8.800-1 .8-2.300 0-1.800-1.700-3.200-4-3.200C6 6.700 2.500 8 1.200 9z" fill="url(#eg1)"/><path d="M9 12.500c0 3 2.500 6 6.500 6 1.800 0 3.200-.5 4.300-1.200-1.800 2.400-4.800 3.700-8 3.700-4 0-7-2-8.600-5 2 1.500 4.300.5 5.800-3.500z" fill="#0f4a9c" opacity=".55"/><ellipse cx="12.800" cy="11" rx="2.300" ry="2.600" fill="#e8f3fb"/></svg><div style="position:absolute;left:835.5px;top:860px;width:4px;height:1px;background:#8a8f98;border-radius:1px"></div><svg style="position:absolute;left:864px;top:837.5px;" width="21" height="19" viewBox="0 0 21 19"><path d="M1 2.500C1 1.700 1.600 1 2.500 1H7l2 2H18.500c.8 0 1.500.7 1.500 1.500V6H1z" fill="#e2a21a"/><rect x="1" y="3.800" width="19" height="14.500" rx="1.300" fill="#fbcf45"/><path d="M1 17V9h19v8c0 .8-.7 1.300-1.500 1.300h-16C1.700 18.300 1 17.800 1 17z" fill="#f7bf2e"/><path d="M5 18.300V14c0-.8.700-1.500 1.500-1.500h8c.8 0 1.500.7 1.500 1.500v4.300z" fill="#1879d2"/><rect x="5" y="16" width="11" height="2.300" fill="#0f62b8"/></svg><div style="position:absolute;left:872px;top:860px;width:4px;height:1px;background:#8a8f98;border-radius:1px"></div><svg style="position:absolute;left:900.5px;top:837px;" width="20" height="20" viewBox="0 0 20 20"><path d="M6 4.500V3.300C6 1.800 7.200 .8 8.500.8h3C12.800.8 14 1.800 14 3.300v1.200" fill="none" stroke="#36a4e6" stroke-width="1.600"/><path d="M1 5.200C1 4.500 1.500 4 2.200 4h15.600c.7 0 1.200.5 1.200 1.200V16c0 2-1.300 3.300-3.300 3.300H4.300C2.300 19.300 1 18 1 16z" fill="#12478a"/><rect x="6" y="7.800" width="3.400" height="3.400" fill="#f0532a"/><rect x="10.300" y="7.800" width="3.400" height="3.400" fill="#7fba2c"/><rect x="6" y="12" width="3.400" height="3.400" fill="#2ba0ea"/><rect x="10.300" y="12" width="3.400" height="3.400" fill="#f9b91c"/></svg><svg style="position:absolute;left:937px;top:837.5px;" width="21" height="19" viewBox="0 0 21 19"><path d="M4 7L12 1.500c.6-.4 1.300-.4 1.900 0L20 6v9.500c0 1.200-.8 2-2 2H6c-1.200 0-2-.8-2-2z" fill="#1f6fd0"/><path d="M7 3.800L15.500.8 20 4.500 11 9.500z" fill="#5a4fd0"/><path d="M4 8l8 4.500L20 7v8.500c0 1.200-.8 2-2 2H6c-1.200 0-2-.8-2-2z" fill="#35b4f0"/><path d="M10 17.500L20 8.500v7c0 1.200-.8 2-2 2z" fill="#1d8ae0"/><rect x=".5" y="7.500" width="8.500" height="8.500" rx="1.600" fill="#0f5bb8"/><circle cx="4.700" cy="11.700" r="2.300" fill="none" stroke="#fff" stroke-width="1.300"/></svg><div style="position:absolute;left:969px;top:831.5px;width:32px;height:30px;background:rgba(255,255,255,.5);border-radius:4px 4px 0 0;border:1px solid rgba(255,255,255,.6);border-bottom:0"></div><svg style="position:absolute;left:974.5px;top:836.5px;" width="21" height="21" viewBox="0 0 21 21"><circle cx="10.500" cy="10.500" r="10" fill="#fff"/><path d="M10.500 10.500L1.850 5.500A10 10 0 0 1 19.150 5.500Z" fill="#e33b2e"/><path d="M10.500.5A10 10 0 0 1 19.160 5.500H10.500Z" fill="#e33b2e"/><path d="M19.160 5.500A10 10 0 0 1 10.500 20.500L14.830 13Z" fill="#f9c02d"/><path d="M19.160 5.500H10.500L14.830 13Z" fill="#f9c02d"/><path d="M1.840 5.500A10 10 0 0 0 10.500 20.500L14.830 13H6.170Z" fill="#2fa04e"/><path d="M1.840 5.500L6.170 13 10.500 10.500Z" fill="#2fa04e"/><circle cx="10.500" cy="10.500" r="4.700" fill="#fff"/><circle cx="10.500" cy="10.500" r="3.700" fill="#3f82ea"/></svg><div style="position:absolute;left:979.5px;top:859.8px;width:10.5px;height:1.2px;background:#0a5fc0;border-radius:1px"></div><svg style="position:absolute;left:1012px;top:837px;" width="19.5" height="19.5" viewBox="0 0 19.5 19.5"><rect x="7" y="1.500" width="11.500" height="16.500" rx=".8" fill="#fff" stroke="#3a67b4" stroke-width=".9"/><path d="M11.500 5h5.500M11.500 7.500h5.500M11.500 10h5.500M11.500 12.500h5.500M11.500 15h5.500" stroke="#3a67b4" stroke-width="1"/><path d="M.5 2.300L11 .5V19L.5 17.200z" fill="#2a5699"/><path d="M2.500 6.500l1.300 6.500 1.500-5 1.500 5 1.400-6.500" fill="none" stroke="#fff" stroke-width="1.200" stroke-linejoin="round"/></svg><div style="position:absolute;left:1019.5px;top:860px;width:4px;height:1px;background:#8a8f98;border-radius:1px"></div><svg style="position:absolute;left:1049.5px;top:840px;" width="20" height="21" viewBox="0 0 20 21"><rect x="1.500" y="1.500" width="9.500" height="9.500" rx="1.500" fill="#fff" stroke="#d8321c" stroke-width="1.800" stroke-dasharray="2.200 1.100"/><path d="M11 8.500l-1 8M6 12.500h9.500" stroke="#9aa0a8" stroke-width="1.600" stroke-linecap="round"/><circle cx="16.800" cy="12.500" r="1.700" fill="none" stroke="#2aa3e8" stroke-width="1.200"/><circle cx="10" cy="18.500" r="1.700" fill="none" stroke="#2aa3e8" stroke-width="1.200"/></svg><div style="position:absolute;left:1052px;top:860px;width:14px;height:1px;background:#9a9fa8;border-radius:1px"></div><svg style="position:absolute;left:1451px;top:842.5px;" width="11" height="8" viewBox="0 0 11 8"><path d="M1.500 6L5.500 2L9.500 6" fill="none" stroke="#222" stroke-width="1.300" stroke-linecap="round" stroke-linejoin="round"/></svg><svg style="position:absolute;left:1475.5px;top:839.5px;" width="15" height="15" viewBox="0 0 15 15"><rect x="1" y="2" width="9.500" height="8" rx=".8" fill="none" stroke="#222" stroke-width="1.100"/><path d="M5.700 10v2.500M3 13h6" stroke="#222" stroke-width="1.100"/><rect x="10.800" y="1" width="2.700" height="3.600" rx=".6" fill="#dfe6f1" stroke="#222" stroke-width=".9"/><path d="M12.200 4.600V13H9.500" fill="none" stroke="#222" stroke-width="1"/></svg><svg style="position:absolute;left:1495.5px;top:840px;" width="16" height="14" viewBox="0 0 16 14"><path d="M1 5h2.200L6 2.300v9.400L3.200 9H1z" fill="none" stroke="#222" stroke-width="1" stroke-linejoin="round"/><path d="M8 4.800c.9.600.9 3.800 0 4.400M10 3.300c1.700 1.400 1.700 6 0 7.400M12 2c2.400 2.200 2.400 7.800 0 10" fill="none" stroke="#222" stroke-width=".9" stroke-linecap="round"/></svg><span class="t" style="left:1543.3px;top:835.5px;transform:scaleX(1.0119);font:400 9px 'Liberation Sans',sans-serif;color:#1f1f1f;">10:16</span><span class="t" style="left:1524.3px;top:848.3px;transform:scaleX(1.0438);font:400 9px 'Liberation Sans',sans-serif;color:#1f1f1f;">5.12.2025</span><svg style="position:absolute;left:1573px;top:840px;" width="14" height="14" viewBox="0 0 14 14"><path d="M3 9.500V6.500C3 4 4.500 2.500 6.500 2.500S10 4 10 6.500v3l1 1.300H2z" fill="none" stroke="#222" stroke-width="1" stroke-linejoin="round"/><path d="M5.300 11.800a1.300 1.300 0 0 0 2.400 0" fill="none" stroke="#222" stroke-width="1"/><path d="M8.500 1h2.300L8.500 3.600h2.300" fill="none" stroke="#222" stroke-width=".8" stroke-linejoin="round" stroke-linecap="round"/><path d="M5.300 5h1.800L5.300 7.200h1.800" fill="none" stroke="#222" stroke-width=".7" stroke-linejoin="round" stroke-linecap="round"/></svg></footer>
</body></html>
